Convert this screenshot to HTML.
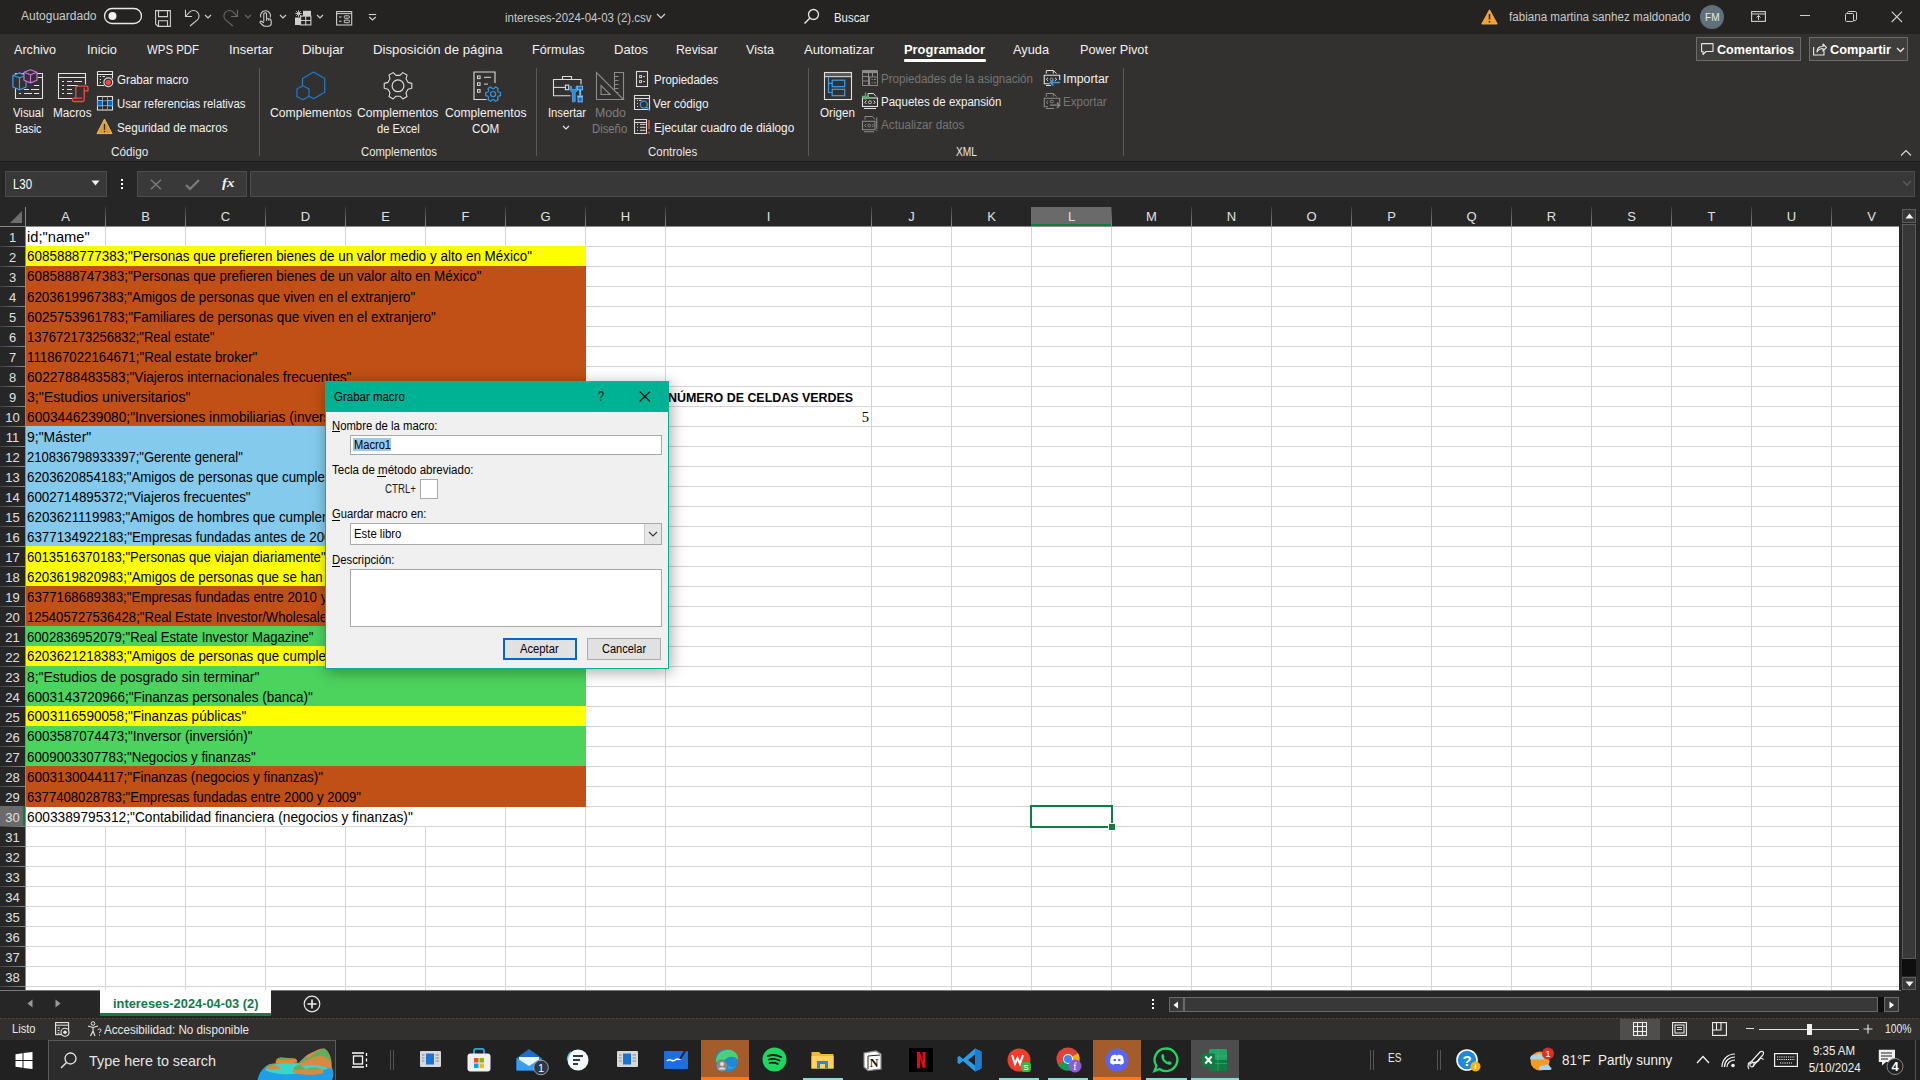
<!DOCTYPE html>
<html><head><meta charset="utf-8"><title>Excel</title>
<style>
html,body{margin:0;padding:0;width:1920px;height:1080px;overflow:hidden;background:#262626;font-family:"Liberation Sans",sans-serif;}
body>div,body>svg{position:absolute;}
.t{position:absolute;white-space:pre;line-height:1;}
svg{overflow:visible}
</style></head><body>
<div style="left:0px;top:0px;width:1920px;height:34px;background:#242321"></div>
<div style="left:0px;top:34px;width:1920px;height:127px;background:#32312f"></div>
<div style="left:0px;top:161px;width:1920px;height:1px;background:#1c1c1c"></div>
<div style="left:0px;top:162px;width:1920px;height:828px;background:#262626"></div>
<div class="t" style="left:21.00px;top:9.84px;font-size:12px;color:#cacaca;font-weight:400;font-family:'Liberation Sans',sans-serif;transform:scaleX(1.0013);transform-origin:left;">Autoguardado</div>
<svg style="left:103px;top:7px;" width="40" height="18" viewBox="0 0 40 18"><rect x="1.5" y="1.5" width="37" height="15" rx="7.5" fill="none" stroke="#e8e8e8" stroke-width="1.3"/><circle cx="9.5" cy="9" r="4" fill="#f0f0f0"/></svg>
<svg style="left:155px;top:9.5px;" width="17" height="17" viewBox="0 0 17 17"><path d="M0.6 0.6 H15.4 V16.4 H3 L0.6 14 Z" fill="none" stroke="#cfcfcf" stroke-width="1.1"/><path d="M3.5 0.6 V6.6 H12.5 V0.6" fill="none" stroke="#cfcfcf" stroke-width="1.1"/><path d="M3.5 16.4 V10.8 H12.5 V16.4" fill="none" stroke="#cfcfcf" stroke-width="1.1"/></svg>
<svg style="left:184px;top:9px;" width="18" height="18" viewBox="0 0 18 18"><path d="M1.5 0.8 V7.5 H8" fill="none" stroke="#cfcfcf" stroke-width="1.1"/><path d="M2 7 L5.6 3.1 A5.5 5.5 0 0 1 13.4 10.9 L6 17" fill="none" stroke="#cfcfcf" stroke-width="1.1"/></svg>
<svg style="left:204px;top:14px;" width="9" height="6" viewBox="0 0 9 6"><path d="M1 1 L4 4 L7 1" fill="none" stroke="#cfcfcf" stroke-width="1.2"/></svg>
<svg style="left:223px;top:9px;" width="18" height="18" viewBox="0 0 18 18"><path d="M14.4 0.8 V7.5 H8.1" fill="none" stroke="#6a6a6a" stroke-width="1.1"/><path d="M13.9 7 L10.3 3.1 A5.5 5.5 0 0 0 2.5 10.9 L9.9 17" fill="none" stroke="#6a6a6a" stroke-width="1.1"/></svg>
<svg style="left:244px;top:14px;" width="9" height="6" viewBox="0 0 9 6"><path d="M1 1 L4 4 L7 1" fill="none" stroke="#6a6a6a" stroke-width="1.1"/></svg>
<svg style="left:259px;top:9px;" width="14" height="18" viewBox="0 0 14 18"><path d="M1.8 8.5 A5 5 0 1 1 11.2 8.5" fill="none" stroke="#cfcfcf" stroke-width="1.1"/><path d="M4.8 12.5 V5 C4.8 3.5 7.6 3.5 7.6 5 V9.8 H9.8 C11.4 9.8 12.2 10.6 12.2 12.2 V14.8 C12.2 16.4 11 17.2 9 17.2 H6.3 C5 17.2 4 16.5 3 15.5 L1.2 13.6 C0.6 12.8 1.5 11.6 2.6 12.3 L4.8 13.8" fill="none" stroke="#cfcfcf" stroke-width="1.1" stroke-linejoin="round"/><path d="M7.6 9.8 V12 M9.8 9.8 V12" stroke="#cfcfcf" stroke-width="0.9"/></svg>
<svg style="left:279px;top:14px;" width="9" height="6" viewBox="0 0 9 6"><path d="M1 1 L4 4 L7 1" fill="none" stroke="#cfcfcf" stroke-width="1.2"/></svg>
<svg style="left:295px;top:10px;" width="17" height="16" viewBox="0 0 17 16"><rect x="8" y="0.8" width="8" height="5.2" fill="#cfcfcf"/><rect x="0" y="7.5" width="5.5" height="7.5" fill="#cfcfcf"/><rect x="5.6" y="6.1" width="10.3" height="8.8" fill="none" stroke="#cfcfcf" stroke-width="1.1"/><path d="M10.75 6 V15 M5.5 10.5 H16" stroke="#cfcfcf" stroke-width="1.1"/><path d="M3.5 0.3 V6.7 M0.3 3.5 H6.7 M1.2 1.2 L5.8 5.8 M5.8 1.2 L1.2 5.8" stroke="#cfcfcf" stroke-width="0.9"/></svg>
<svg style="left:316px;top:14px;" width="9" height="6" viewBox="0 0 9 6"><path d="M1 1 L4 4 L7 1" fill="none" stroke="#cfcfcf" stroke-width="1.2"/></svg>
<svg style="left:336px;top:10.5px;" width="17" height="15" viewBox="0 0 17 15"><rect x="0.6" y="0.6" width="15.1" height="13.4" fill="none" stroke="#cfcfcf" stroke-width="1.1"/><path d="M0.6 2.6 H15.7" stroke="#cfcfcf" stroke-width="1"/><path d="M3 6 H5.6 M3 10.2 H5.6" stroke="#cfcfcf" stroke-width="1.1"/><rect x="8.3" y="4.8" width="5" height="2.4" rx="0.5" fill="none" stroke="#cfcfcf" stroke-width="1"/><rect x="8.3" y="9.1" width="5" height="2.6" rx="0.5" fill="none" stroke="#cfcfcf" stroke-width="1"/></svg>
<svg style="left:368px;top:13px;" width="10" height="9" viewBox="0 0 10 9"><path d="M0.8 1.5 H8.2" stroke="#cfcfcf" stroke-width="1.1"/><path d="M1.2 4 L4.5 7 L7.8 4" fill="none" stroke="#cfcfcf" stroke-width="1.2"/></svg>
<div class="t" style="left:505.00px;top:11.84px;font-size:12px;color:#cacaca;font-weight:400;font-family:'Liberation Sans',sans-serif;transform:scaleX(0.9550);transform-origin:left;">intereses-2024-04-03 (2).csv</div>
<svg style="left:656px;top:13px;" width="11" height="7" viewBox="0 0 11 7"><path d="M1 1 L5 5 L9 1" fill="none" stroke="#d6d6d6" stroke-width="1.2"/></svg>
<svg style="left:803px;top:8px;" width="17" height="17" viewBox="0 0 17 17"><circle cx="10.5" cy="6.5" r="5" fill="none" stroke="#e6e6e6" stroke-width="1.3"/><path d="M7 10 L1.5 15.5" stroke="#e6e6e6" stroke-width="1.4"/></svg>
<div class="t" style="left:834.00px;top:11.84px;font-size:12px;color:#f0f0f0;font-weight:400;font-family:'Liberation Sans',sans-serif;transform:scaleX(0.9505);transform-origin:left;">Buscar</div>
<svg style="left:1481px;top:9px;" width="17" height="16" viewBox="0 0 17 16"><path d="M8.5 0.8 L16.3 15 H0.7 Z" fill="#f2a33a" stroke="#f2a33a" stroke-width="1" stroke-linejoin="round"/><path d="M8.5 5 V10.5" stroke="#2b2b2b" stroke-width="1.6"/><circle cx="8.5" cy="12.7" r="0.9" fill="#2b2b2b"/></svg>
<div class="t" style="left:1509.00px;top:10.84px;font-size:12px;color:#cacaca;font-weight:400;font-family:'Liberation Sans',sans-serif;transform:scaleX(0.9682);transform-origin:left;">fabiana martina sanhez maldonado</div>
<svg style="left:1700px;top:5px;" width="24" height="24" viewBox="0 0 24 24"><circle cx="12" cy="12" r="12" fill="#5f727c"/></svg>
<div class="t" style="left:1703.70px;top:12.27px;font-size:11.5px;color:#e8e8e8;font-weight:400;font-family:'Liberation Sans',sans-serif;transform:scaleX(0.8733);transform-origin:center;">FM</div>
<svg style="left:1751px;top:11px;" width="15" height="11" viewBox="0 0 15 11"><rect x="0.6" y="0.6" width="13.8" height="9.8" fill="none" stroke="#cfcfcf" stroke-width="1.1"/><path d="M0.6 3 H14.4" stroke="#cfcfcf" stroke-width="1"/><path d="M7.5 9 V4.5 M5.5 6.5 L7.5 4.5 L9.5 6.5" fill="none" stroke="#cfcfcf" stroke-width="1"/></svg>
<div style="left:1800px;top:15px;width:10px;height:1px;background:#d0d0d0"></div>
<svg style="left:1845px;top:11px;" width="12" height="12" viewBox="0 0 12 12"><rect x="0.5" y="2.5" width="8" height="8" rx="1" fill="none" stroke="#d0d0d0" stroke-width="1"/><path d="M2.5 2.5 V1.8 C2.5 0.9 3 0.5 4 0.5 H10 C11 0.5 11.5 1 11.5 2 V8 C11.5 9 11 9.5 10 9.5 H8.5" fill="none" stroke="#d0d0d0" stroke-width="1"/></svg>
<svg style="left:1891px;top:11px;" width="12" height="12" viewBox="0 0 12 12"><path d="M0.7 0.7 L11 11 M11 0.7 L0.7 11" stroke="#d0d0d0" stroke-width="1.1"/></svg>
<div class="t" style="left:14.00px;top:42.57px;font-size:13.5px;color:#f2f2f2;font-weight:400;font-family:'Liberation Sans',sans-serif;transform:scaleX(0.9330);transform-origin:left;">Archivo</div>
<div class="t" style="left:87.00px;top:42.57px;font-size:13.5px;color:#f2f2f2;font-weight:400;font-family:'Liberation Sans',sans-serif;transform:scaleX(0.9519);transform-origin:left;">Inicio</div>
<div class="t" style="left:147.00px;top:42.57px;font-size:13.5px;color:#f2f2f2;font-weight:400;font-family:'Liberation Sans',sans-serif;transform:scaleX(0.8455);transform-origin:left;">WPS PDF</div>
<div class="t" style="left:229.00px;top:42.57px;font-size:13.5px;color:#f2f2f2;font-weight:400;font-family:'Liberation Sans',sans-serif;transform:scaleX(0.9614);transform-origin:left;">Insertar</div>
<div class="t" style="left:302.00px;top:42.57px;font-size:13.5px;color:#f2f2f2;font-weight:400;font-family:'Liberation Sans',sans-serif;transform:scaleX(0.9821);transform-origin:left;">Dibujar</div>
<div class="t" style="left:373.00px;top:42.57px;font-size:13.5px;color:#f2f2f2;font-weight:400;font-family:'Liberation Sans',sans-serif;transform:scaleX(0.9804);transform-origin:left;">Disposición de página</div>
<div class="t" style="left:532.00px;top:42.57px;font-size:13.5px;color:#f2f2f2;font-weight:400;font-family:'Liberation Sans',sans-serif;transform:scaleX(0.9332);transform-origin:left;">Fórmulas</div>
<div class="t" style="left:614.00px;top:42.57px;font-size:13.5px;color:#f2f2f2;font-weight:400;font-family:'Liberation Sans',sans-serif;transform:scaleX(0.9641);transform-origin:left;">Datos</div>
<div class="t" style="left:676.00px;top:42.57px;font-size:13.5px;color:#f2f2f2;font-weight:400;font-family:'Liberation Sans',sans-serif;transform:scaleX(0.9069);transform-origin:left;">Revisar</div>
<div class="t" style="left:746.00px;top:42.57px;font-size:13.5px;color:#f2f2f2;font-weight:400;font-family:'Liberation Sans',sans-serif;transform:scaleX(0.9406);transform-origin:left;">Vista</div>
<div class="t" style="left:804.00px;top:42.57px;font-size:13.5px;color:#f2f2f2;font-weight:400;font-family:'Liberation Sans',sans-serif;transform:scaleX(0.9718);transform-origin:left;">Automatizar</div>
<div class="t" style="left:1013.00px;top:42.57px;font-size:13.5px;color:#f2f2f2;font-weight:400;font-family:'Liberation Sans',sans-serif;transform:scaleX(0.9465);transform-origin:left;">Ayuda</div>
<div class="t" style="left:1080.00px;top:42.57px;font-size:13.5px;color:#f2f2f2;font-weight:400;font-family:'Liberation Sans',sans-serif;transform:scaleX(0.9441);transform-origin:left;">Power Pivot</div>
<div class="t" style="left:904.00px;top:42.57px;font-size:13.5px;color:#ffffff;font-weight:700;font-family:'Liberation Sans',sans-serif;transform:scaleX(0.9555);transform-origin:left;">Programador</div>
<div style="left:904px;top:59px;width:82px;height:3px;background:#ffffff;border-radius:1px"></div>
<div style="left:1696px;top:37px;width:105px;height:24px;background:#3f3e3d;border:1px solid #6c6b6a;box-sizing:border-box"></div>
<svg style="left:1701px;top:43px;" width="13" height="13" viewBox="0 0 13 13"><path d="M0.6 0.6 H12 V8.5 H5 L2 11.5 V8.5 H0.6 Z" fill="none" stroke="#e8e8e8" stroke-width="1.1" stroke-linejoin="round"/></svg>
<div class="t" style="left:1717.00px;top:43.00px;font-size:13px;color:#ffffff;font-weight:700;font-family:'Liberation Sans',sans-serif;transform:scaleX(0.9690);transform-origin:left;">Comentarios</div>
<div style="left:1809px;top:37px;width:99px;height:24px;background:#3f3e3d;border:1px solid #6c6b6a;box-sizing:border-box"></div>
<svg style="left:1813px;top:42px;" width="14" height="14" viewBox="0 0 14 14"><path d="M0.6 5 V13 H11 V9" fill="none" stroke="#e8e8e8" stroke-width="1.1"/><path d="M4 10 C4 6 6 4.5 10 4.5 V2 L13.4 5.5 L10 9 V6.5 C7 6.5 5.5 7.5 4 10 Z" fill="none" stroke="#e8e8e8" stroke-width="1.1" stroke-linejoin="round"/></svg>
<div class="t" style="left:1830.00px;top:43.00px;font-size:13px;color:#ffffff;font-weight:700;font-family:'Liberation Sans',sans-serif;transform:scaleX(0.9820);transform-origin:left;">Compartir</div>
<svg style="left:1896px;top:47px;" width="9" height="6" viewBox="0 0 9 6"><path d="M1 1 L4.5 4.5 L8 1" fill="none" stroke="#e8e8e8" stroke-width="1.3"/></svg>
<div style="left:259px;top:68px;width:1px;height:88px;background:#5a5a5a"></div>
<div style="left:536px;top:68px;width:1px;height:88px;background:#5a5a5a"></div>
<div style="left:808px;top:68px;width:1px;height:88px;background:#5a5a5a"></div>
<div style="left:1123px;top:68px;width:1px;height:88px;background:#5a5a5a"></div>
<svg style="left:12px;top:69px;" width="33" height="32" viewBox="0 0 33 32">
<path d="M3.5 4.5 H30.5 V29.5 H3.5 Z M26 8.5 H30.5" fill="none" stroke="#e2e2e2" stroke-width="1.1"/>
<path d="M22 16.5 H27.2 M11.8 20.5 H17 M19 20.5 H27.2 M7 24.5 H9 M12 24.5 H20 M22 24.5 H27.2" stroke="#e2e2e2" stroke-width="1.2"/>
<path d="M7.5 3.9 L14 6.5 V18 L7.5 20.8 L0.9 18 V6.5 Z" fill="#32312f" stroke="#3c9ef0" stroke-width="1.2" stroke-linejoin="round"/>
<path d="M0.9 6.5 L7.5 8.8 L14 6.5 M7.5 8.8 V20.8" fill="none" stroke="#3c9ef0" stroke-width="1.2" stroke-linejoin="round"/>
<path d="M18.5 0.8 L25 3.3 V11.3 L18.5 13.9 L12 11.3 V3.3 Z" fill="#32312f" stroke="#d070e0" stroke-width="1.2" stroke-linejoin="round"/>
<path d="M12 3.3 L18.5 5.8 L25 3.3 M18.5 5.8 V13.9" fill="none" stroke="#d070e0" stroke-width="1.2" stroke-linejoin="round"/>
</svg>
<div class="t" style="left:13.00px;top:106.84px;font-size:12px;color:#f2f2f2;font-weight:400;font-family:'Liberation Sans',sans-serif;transform:scaleX(0.9456);transform-origin:left;">Visual</div>
<div class="t" style="left:15.20px;top:122.84px;font-size:12px;color:#f2f2f2;font-weight:400;font-family:'Liberation Sans',sans-serif;transform:scaleX(0.9031);transform-origin:left;">Basic</div>
<svg style="left:57px;top:71px;" width="33" height="32" viewBox="0 0 33 32">
<path d="M15 27.5 H1.5 V2.5 H28.5 V13.5 M1.5 6.5 H28.5" fill="none" stroke="#e2e2e2" stroke-width="1.1"/>
<path d="M5 10.5 H7 M10 10.5 H15 M17 10.5 H25 M5 14.5 H7 M10 14.5 H21 M5 18.5 H7 M10 18.5 H15 M5 22.5 H7 M10 22.5 H15.5" stroke="#e2e2e2" stroke-width="1.2"/>
<path d="M20 15.2 H29.5 Q31 15.2 31 17 V19.8 H27.2 V28.8 Q27.2 30.5 25.5 30.5 H17 Q15.3 30.5 15.3 28.8 Q15.3 27.2 17 27.2 H18.8 V17 Q18.8 15.2 20 15.2 Z" fill="#32312f" stroke="#ef4b40" stroke-width="1.3" stroke-linejoin="round"/>
<path d="M27.2 16.5 V19.8 M25 27.2 H17" fill="none" stroke="#ef4b40" stroke-width="1.2"/>
</svg>
<div class="t" style="left:52.50px;top:106.84px;font-size:12px;color:#f2f2f2;font-weight:400;font-family:'Liberation Sans',sans-serif;transform:scaleX(0.9787);transform-origin:left;">Macros</div>
<svg style="left:96px;top:70px;" width="18" height="18" viewBox="0 0 18 18">
<path d="M1.5 1.5 H16.5 V8.5 M1.5 1.5 V15.5 H8 M1.5 4.5 H16.5" fill="none" stroke="#e2e2e2" stroke-width="1.1"/>
<path d="M3.8 6.5 H5 M3.8 9.5 H5 M3.8 12.5 H5 M6.5 6.5 H9" stroke="#e2e2e2" stroke-width="1.1"/>
<circle cx="12.3" cy="12.3" r="4.4" fill="#32312f" stroke="#d8d8d8" stroke-width="1.2"/>
<circle cx="12.3" cy="12.3" r="2.6" fill="#ef4b40"/>
</svg>
<div class="t" style="left:116.50px;top:73.84px;font-size:12px;color:#f2f2f2;font-weight:400;font-family:'Liberation Sans',sans-serif;transform:scaleX(0.9659);transform-origin:left;">Grabar macro</div>
<svg style="left:96px;top:95px;" width="18" height="16" viewBox="0 0 18 16">
<rect x="1.5" y="1.5" width="15" height="13.5" fill="#2a2928" stroke="#e2e2e2" stroke-width="1.1"/>
<path d="M6.5 1.5 V15 M11.5 1.5 V15 M1.5 5.8 H16.5 M1.5 10.6 H16.5" stroke="#9a9a9a" stroke-width="0.9"/>
<rect x="1.5" y="5.5" width="5" height="5.3" fill="#0a64c0" stroke="#6cb8f8" stroke-width="1"/>
<rect x="11.5" y="5.5" width="5" height="5.3" fill="#0a64c0" stroke="#6cb8f8" stroke-width="1"/>
</svg>
<div class="t" style="left:116.50px;top:97.84px;font-size:12px;color:#f2f2f2;font-weight:400;font-family:'Liberation Sans',sans-serif;transform:scaleX(0.9445);transform-origin:left;">Usar referencias relativas</div>
<svg style="left:96px;top:118px;" width="17" height="17" viewBox="0 0 17 17"><path d="M8.5 1 L16 15.6 H1 Z" fill="#e49a34" stroke="#f3c169" stroke-width="0.9" stroke-linejoin="round"/><path d="M8.5 6 V11.8" stroke="#2b2b2b" stroke-width="1.3"/><circle cx="8.5" cy="13.6" r="0.8" fill="#2b2b2b"/></svg>
<div class="t" style="left:116.50px;top:121.84px;font-size:12px;color:#f2f2f2;font-weight:400;font-family:'Liberation Sans',sans-serif;transform:scaleX(0.9688);transform-origin:left;">Seguridad de macros</div>
<div class="t" style="left:111.30px;top:145.84px;font-size:12px;color:#e8e8e8;font-weight:400;font-family:'Liberation Sans',sans-serif;transform:scaleX(0.9782);transform-origin:left;">Código</div>
<svg style="left:296px;top:71px;" width="30" height="30" viewBox="0 0 30 30">
<path d="M6.5 14.7 V7.5 L17.5 1 L28.75 7.5 V21.25 L17.5 27.75 L13.2 25.2" fill="none" stroke="#1f7cd2" stroke-width="1.2" stroke-linejoin="round"/>
<path d="M6.9 14.75 L13 18 V25.5 L6.9 28.75 L0.9 25.5 V18 Z" fill="none" stroke="#1f7cd2" stroke-width="1.2" stroke-linejoin="round"/>
</svg>
<div class="t" style="left:270.20px;top:106.84px;font-size:12px;color:#f2f2f2;font-weight:400;font-family:'Liberation Sans',sans-serif;transform:scaleX(1.0124);transform-origin:left;">Complementos</div>
<svg style="left:383px;top:71px;" width="30" height="30" viewBox="0 0 30 30"><path d="M25.02 11.35 L28.79 12.37 L28.79 17.23 L25.02 18.25 L23.00 21.75 L24.00 25.52 L19.79 27.96 L17.02 25.21 L12.98 25.21 L10.21 27.96 L6.00 25.52 L7.00 21.75 L4.98 18.25 L1.21 17.23 L1.21 12.37 L4.98 11.35 L7.00 7.85 L6.00 4.08 L10.21 1.64 L12.98 4.39 L17.02 4.39 L19.79 1.64 L24.00 4.08 L23.00 7.85 Z" fill="none" stroke="#dcdcdc" stroke-width="1.1" stroke-linejoin="round"/><circle cx="15" cy="14.8" r="5.9" fill="none" stroke="#dcdcdc" stroke-width="1.2"/></svg>
<div class="t" style="left:357.40px;top:106.84px;font-size:12px;color:#f2f2f2;font-weight:400;font-family:'Liberation Sans',sans-serif;transform:scaleX(1.0062);transform-origin:left;">Complementos</div>
<div class="t" style="left:377.40px;top:122.84px;font-size:12px;color:#f2f2f2;font-weight:400;font-family:'Liberation Sans',sans-serif;transform:scaleX(0.9256);transform-origin:left;">de Excel</div>
<svg style="left:473px;top:71px;" width="31" height="31" viewBox="0 0 31 31">
<path d="M13.5 28.5 H1 V1 H22 V12" fill="none" stroke="#dcdcdc" stroke-width="1.1"/>
<rect x="4.5" y="5" width="2.6" height="2.6" fill="none" stroke="#dcdcdc" stroke-width="1"/>
<rect x="4.5" y="11.8" width="2.6" height="2.6" fill="none" stroke="#dcdcdc" stroke-width="1"/>
<rect x="4.5" y="18.6" width="2.6" height="2.6" fill="none" stroke="#dcdcdc" stroke-width="1"/>
<path d="M11 6.3 H18 M11 13.1 H15" stroke="#dcdcdc" stroke-width="1"/>
<path d="M25.29 21.00 L27.53 21.52 L27.53 24.68 L25.29 25.20 L24.51 26.55 L25.19 28.75 L22.45 30.33 L20.88 28.65 L19.32 28.65 L17.75 30.33 L15.01 28.75 L15.69 26.55 L14.91 25.20 L12.67 24.68 L12.67 21.52 L14.91 21.00 L15.69 19.65 L15.01 17.45 L17.75 15.87 L19.32 17.55 L20.88 17.55 L22.45 15.87 L25.19 17.45 L24.51 19.65 Z" fill="#32312f" stroke="#3a95e0" stroke-width="1.2" stroke-linejoin="round"/>
<circle cx="20.1" cy="23.1" r="2.6" fill="none" stroke="#3a95e0" stroke-width="1.2"/>
</svg>
<div class="t" style="left:444.50px;top:106.84px;font-size:12px;color:#f2f2f2;font-weight:400;font-family:'Liberation Sans',sans-serif;transform:scaleX(1.0099);transform-origin:left;">Complementos</div>
<div class="t" style="left:471.50px;top:122.84px;font-size:12px;color:#f2f2f2;font-weight:400;font-family:'Liberation Sans',sans-serif;transform:scaleX(0.9716);transform-origin:left;">COM</div>
<div class="t" style="left:360.60px;top:145.84px;font-size:12px;color:#e8e8e8;font-weight:400;font-family:'Liberation Sans',sans-serif;transform:scaleX(0.9405);transform-origin:left;">Complementos</div>
<svg style="left:552px;top:75px;" width="32" height="29" viewBox="0 0 32 29">
<path d="M10.5 4.3 V1.5 H19.5 V4.3" fill="none" stroke="#dcdcdc" stroke-width="1.1"/>
<path d="M18.5 20.8 H1.5 V4.5 H29 V9.5" fill="none" stroke="#dcdcdc" stroke-width="1.1"/>
<path d="M1.5 12.4 H13.4" stroke="#dcdcdc" stroke-width="1.1"/>
<rect x="13.4" y="10.1" width="3.3" height="4.6" fill="none" stroke="#dcdcdc" stroke-width="1.1"/>
<path d="M18.3 11.2 Q17 16.2 20.4 17.2 V26.8 H23.2 V17.2 Q26.6 16.2 25.3 11.2 L24 11.2 V14.4 H19.6 V11.2 Z" fill="#2a8ee8" stroke="#6cb8f8" stroke-width="0.6"/>
<rect x="25.6" y="11.2" width="5" height="3.6" fill="#1a6cc8" stroke="#7cc0ff" stroke-width="0.9"/>
<rect x="27.3" y="14.8" width="1.8" height="5.8" fill="#7cc0ff"/>
<rect x="25.2" y="20.5" width="5.8" height="1.6" fill="#7cc0ff"/>
<rect x="26" y="22.1" width="4.2" height="4.8" fill="#1a6cc8" stroke="#7cc0ff" stroke-width="0.9"/>
</svg>
<div class="t" style="left:547.70px;top:106.84px;font-size:12px;color:#f2f2f2;font-weight:400;font-family:'Liberation Sans',sans-serif;transform:scaleX(0.9341);transform-origin:left;">Insertar</div>
<svg style="left:562px;top:125px;" width="9" height="6" viewBox="0 0 9 6"><path d="M1 1 L4 4 L7 1" fill="none" stroke="#e8e8e8" stroke-width="1.2"/></svg>
<svg style="left:595px;top:71px;" width="30" height="30" viewBox="0 0 30 30">
<path d="M1.5 1.5 V28.5 H28.5 Z" fill="none" stroke="#8c8c8c" stroke-width="1.1" stroke-linejoin="miter"/>
<path d="M6 14.5 V23.5 H15.2 Z" fill="none" stroke="#8c8c8c" stroke-width="1.1"/>
<path d="M19.5 19.5 V1.5 H28.5 V28.5" fill="none" stroke="#8c8c8c" stroke-width="1.1"/>
<path d="M19.5 5.5 H23.5 M19.5 9.5 H23.5 M19.5 13.5 H23.5 M19.5 17.5 H23.5 M21.5 21.5 H23.5" stroke="#8c8c8c" stroke-width="1"/>
</svg>
<div class="t" style="left:594.60px;top:106.84px;font-size:12px;color:#7f7f7f;font-weight:400;font-family:'Liberation Sans',sans-serif;transform:scaleX(1.0294);transform-origin:left;">Modo</div>
<div class="t" style="left:592.30px;top:122.84px;font-size:12px;color:#7f7f7f;font-weight:400;font-family:'Liberation Sans',sans-serif;transform:scaleX(0.9423);transform-origin:left;">Diseño</div>
<svg style="left:635px;top:70px;" width="14" height="18" viewBox="0 0 14 18">
<rect x="1.5" y="1.5" width="11" height="15" fill="none" stroke="#dcdcdc" stroke-width="1.1"/>
<rect x="4.6" y="5.6" width="2" height="2" fill="none" stroke="#dcdcdc" stroke-width="0.9"/>
<rect x="4.6" y="10.6" width="2" height="2" fill="none" stroke="#dcdcdc" stroke-width="0.9"/>
<path d="M8.2 6.6 H10 M8.2 11.6 H10" stroke="#dcdcdc" stroke-width="1"/>
</svg>
<div class="t" style="left:653.60px;top:73.84px;font-size:12px;color:#f2f2f2;font-weight:400;font-family:'Liberation Sans',sans-serif;transform:scaleX(0.9542);transform-origin:left;">Propiedades</div>
<svg style="left:633px;top:94px;" width="19" height="18" viewBox="0 0 19 18">
<path d="M1.5 1.5 H16.5 V15.5 H1.5 Z M1.5 4.5 H16.5" fill="none" stroke="#dcdcdc" stroke-width="1.1"/>
<path d="M4 6.4 H5 M4 9.4 H5 M4 12.4 H5 M6 6.4 H8.5" stroke="#dcdcdc" stroke-width="1"/>
<circle cx="10.8" cy="10.6" r="3.5" fill="#32312f" stroke="#3a95e0" stroke-width="1.3"/>
<path d="M13.3 13.1 L17 16.8" stroke="#3a95e0" stroke-width="1.5"/>
</svg>
<div class="t" style="left:653.20px;top:97.84px;font-size:12px;color:#f2f2f2;font-weight:400;font-family:'Liberation Sans',sans-serif;transform:scaleX(0.9787);transform-origin:left;">Ver código</div>
<svg style="left:633px;top:118px;" width="19" height="17" viewBox="0 0 19 17">
<path d="M1.5 1.5 H13.5 V15.5 H1.5 Z M1.5 4.5 H13.5" fill="none" stroke="#dcdcdc" stroke-width="1.1"/>
<path d="M4 6.3 H5 M4 9.3 H5 M4 12.3 H5 M7 6.3 H12.5 M7 9.3 H12.5 M7 12.3 H12.5" stroke="#dcdcdc" stroke-width="1"/>
<path d="M16 2 V10.9 M16 13.6 V15.6" stroke="#ef4b40" stroke-width="1.6"/>
</svg>
<div class="t" style="left:653.60px;top:121.84px;font-size:12px;color:#f2f2f2;font-weight:400;font-family:'Liberation Sans',sans-serif;transform:scaleX(0.9820);transform-origin:left;">Ejecutar cuadro de diálogo</div>
<div class="t" style="left:648.30px;top:145.84px;font-size:12px;color:#e8e8e8;font-weight:400;font-family:'Liberation Sans',sans-serif;transform:scaleX(0.9580);transform-origin:left;">Controles</div>
<svg style="left:823px;top:71px;" width="30" height="30" viewBox="0 0 30 30">
<rect x="1.5" y="1.5" width="27" height="4.2" fill="#5a5a5a"/>
<rect x="1.5" y="1.5" width="27" height="27" fill="none" stroke="#e0e0e0" stroke-width="1.1"/>
<path d="M1.5 5.7 H28.5" stroke="#e0e0e0" stroke-width="1"/>
<path d="M5.5 6 V21.5 H9.2 M5.5 12.3 H9.2" fill="none" stroke="#3aa0f0" stroke-width="1.2"/>
<rect x="9.2" y="9.2" width="12.5" height="6.5" fill="none" stroke="#3aa0f0" stroke-width="1.2"/>
<rect x="9.2" y="18.3" width="12.5" height="6.4" fill="none" stroke="#3aa0f0" stroke-width="1.2"/>
</svg>
<div class="t" style="left:820.30px;top:106.84px;font-size:12px;color:#f2f2f2;font-weight:400;font-family:'Liberation Sans',sans-serif;transform:scaleX(0.9717);transform-origin:left;">Origen</div>
<svg style="left:861px;top:69px;" width="18" height="18" viewBox="0 0 18 18">
<rect x="1.5" y="1.5" width="15" height="2.6" fill="#8a8a8a"/>
<path d="M1.5 1.5 H16.5 V7.5 M1.5 1.5 V16.5 H7.5 V1.5 M1.5 7.5 H7.5 M1.5 12 H7.5 M11.5 4 V7.5" fill="none" stroke="#8a8a8a" stroke-width="1"/>
<rect x="8.5" y="8" width="8" height="8.5" fill="none" stroke="#8a8a8a" stroke-width="1"/>
<path d="M10.5 10.5 H11.8 M10.5 13.8 H11.8 M13 10.5 H15 M13 13.8 H15" stroke="#8a8a8a" stroke-width="1.1"/>
</svg>
<div class="t" style="left:881.30px;top:72.84px;font-size:12px;color:#767676;font-weight:400;font-family:'Liberation Sans',sans-serif;transform:scaleX(0.9654);transform-origin:left;">Propiedades de la asignación</div>
<svg style="left:861px;top:92px;" width="18" height="18" viewBox="0 0 18 18">
<path d="M7 4.5 V1.5 H12.5 L15 4.5" fill="none" stroke="#e0e0e0" stroke-width="1"/>
<rect x="1.5" y="6" width="15" height="8.5" fill="none" stroke="#e0e0e0" stroke-width="1.1"/>
<path d="M5.5 8.5 L3.8 10.3 L5.5 12 M12.5 8.5 L14.2 10.3 L12.5 12" fill="none" stroke="#e0e0e0" stroke-width="1"/>
<circle cx="9" cy="10.3" r="1.5" fill="none" stroke="#bcbcbc" stroke-width="1"/>
<path d="M3 16.5 H15" stroke="#e0e0e0" stroke-width="1"/>
<path d="M4.5 0.5 V8 M0.8 4.3 H8.2" stroke="#3cc05a" stroke-width="1.3"/>
</svg>
<div class="t" style="left:881.30px;top:95.84px;font-size:12px;color:#f2f2f2;font-weight:400;font-family:'Liberation Sans',sans-serif;transform:scaleX(0.9599);transform-origin:left;">Paquetes de expansión</div>
<svg style="left:861px;top:115px;" width="18" height="18" viewBox="0 0 18 18">
<path d="M4 4.5 V1.5 H11.5 L14 4.5" fill="none" stroke="#8a8a8a" stroke-width="1"/>
<rect x="1.5" y="6.3" width="12.5" height="8.4" fill="none" stroke="#8a8a8a" stroke-width="1.1"/>
<path d="M5.3 8.8 L3.6 10.5 L5.3 12.2 M11 8.8 L12.7 10.5 L11 12.2" fill="none" stroke="#8a8a8a" stroke-width="1"/>
<circle cx="8.2" cy="10.5" r="1.4" fill="none" stroke="#8a8a8a" stroke-width="1"/>
<path d="M3 16.7 H13 M15.8 2.5 V13.7 M15.8 15 V16" stroke="#8a8a8a" stroke-width="1.1"/>
</svg>
<div class="t" style="left:881.30px;top:118.84px;font-size:12px;color:#767676;font-weight:400;font-family:'Liberation Sans',sans-serif;transform:scaleX(0.9768);transform-origin:left;">Actualizar datos</div>
<svg style="left:1043px;top:69px;" width="18" height="18" viewBox="0 0 18 18">
<path d="M3.3 4.7 V1.5 H10.3 L13.5 4.5 M10.3 1.5 V4.5" fill="none" stroke="#e0e0e0" stroke-width="1"/>
<path d="M16.7 11 V6.3 H1.25 V14.7 H6.5" fill="none" stroke="#e0e0e0" stroke-width="1.1"/>
<path d="M5 8.8 L3.3 10.3 L5 11.8 M12 8.8 L13.7 10.3 L12 11.8" fill="none" stroke="#e0e0e0" stroke-width="1"/>
<circle cx="8.5" cy="10.3" r="1.4" fill="none" stroke="#9a9a9a" stroke-width="1"/>
<path d="M3 16.5 H8" stroke="#e0e0e0" stroke-width="1"/>
<path d="M17 13.5 H7.5 M10.5 10.5 L7.5 13.5 L10.5 16.5" fill="none" stroke="#3aa0f0" stroke-width="1.6"/>
</svg>
<div class="t" style="left:1063.30px;top:72.84px;font-size:12px;color:#f2f2f2;font-weight:400;font-family:'Liberation Sans',sans-serif;transform:scaleX(1.0274);transform-origin:left;">Importar</div>
<svg style="left:1043px;top:92px;" width="18" height="18" viewBox="0 0 18 18">
<path d="M3.3 4.7 V1.5 H10.3 L13.5 4.5 M10.3 1.5 V4.5" fill="none" stroke="#8a8a8a" stroke-width="1"/>
<path d="M16.7 11.5 V6.3 H1.25 V14.7 H5" fill="none" stroke="#8a8a8a" stroke-width="1.1"/>
<path d="M5 8.8 L3.3 10.3 L5 11.8" fill="none" stroke="#8a8a8a" stroke-width="1"/>
<rect x="7.3" y="8.3" width="3" height="2.4" rx="1" fill="none" stroke="#8a8a8a" stroke-width="1"/>
<path d="M3 16.5 H11" stroke="#8a8a8a" stroke-width="1"/>
<path d="M7 13.2 H16.5 M13.8 10.5 L16.8 13.2 L13.8 16" fill="none" stroke="#8a8a8a" stroke-width="1.3"/>
</svg>
<div class="t" style="left:1063.30px;top:95.84px;font-size:12px;color:#767676;font-weight:400;font-family:'Liberation Sans',sans-serif;transform:scaleX(0.9636);transform-origin:left;">Exportar</div>
<div class="t" style="left:955.80px;top:145.84px;font-size:12px;color:#e8e8e8;font-weight:400;font-family:'Liberation Sans',sans-serif;transform:scaleX(0.8471);transform-origin:left;">XML</div>
<svg style="left:1900px;top:149px;" width="12" height="8" viewBox="0 0 12 8"><path d="M1 6.5 L6 1.5 L11 6.5" fill="none" stroke="#d8d8d8" stroke-width="1.2"/></svg>
<div style="left:5px;top:171px;width:102px;height:26px;background:#383838;border:1px solid #4c4c4c;box-sizing:border-box"></div>
<div class="t" style="left:12.50px;top:177.15px;font-size:14px;color:#ffffff;font-weight:400;font-family:'Liberation Sans',sans-serif;transform:scaleX(0.8134);transform-origin:left;">L30</div>
<svg style="left:91px;top:180px;" width="9" height="6" viewBox="0 0 9 6"><path d="M0.5 0.5 H8.5 L4.5 5.5 Z" fill="#f0f0f0"/></svg>
<div style="left:121px;top:179px;width:2px;height:2px;background:#ffffff"></div>
<div style="left:121px;top:183px;width:2px;height:2px;background:#ffffff"></div>
<div style="left:121px;top:187px;width:2px;height:2px;background:#ffffff"></div>
<div style="left:137px;top:171px;width:110px;height:26px;background:#393939;border:1px solid #4c4c4c;box-sizing:border-box"></div>
<svg style="left:150px;top:179px;" width="12" height="11" viewBox="0 0 12 11"><path d="M0.8 0.8 L11 10.2 M11 0.8 L0.8 10.2" stroke="#7b7b7b" stroke-width="1.5"/></svg>
<svg style="left:185px;top:179px;" width="15" height="11" viewBox="0 0 15 11"><path d="M1 6 L5 10 L14 1" fill="none" stroke="#7b7b7b" stroke-width="2.2"/></svg>
<div class="t" style="left:221.50px;top:176.00px;font-size:13px;color:#f0f0f0;font-weight:700;font-family:'Liberation Serif',sans-serif;transform:scaleX(1.1543);transform-origin:left;font-style:italic;">fx</div>
<div style="left:250px;top:171px;width:1665px;height:26px;background:#383838;border:1px solid #4c4c4c;box-sizing:border-box"></div>
<svg style="left:1902px;top:180px;" width="10" height="6" viewBox="0 0 10 6"><path d="M1 1 L5 5 L9 1" fill="none" stroke="#5c5c5c" stroke-width="1.3"/></svg>
<div style="left:26px;top:227px;width:1873px;height:763px;background:#ffffff"></div>
<div style="left:26px;top:227px;width:1873px;height:763px;background:repeating-linear-gradient(to bottom, transparent 0px, transparent 19px, #d4d4d4 19px, #d4d4d4 20px)"></div>
<div style="left:105px;top:227px;width:1px;height:763px;background:#d4d4d4"></div>
<div style="left:185px;top:227px;width:1px;height:763px;background:#d4d4d4"></div>
<div style="left:265px;top:227px;width:1px;height:763px;background:#d4d4d4"></div>
<div style="left:345px;top:227px;width:1px;height:763px;background:#d4d4d4"></div>
<div style="left:425px;top:227px;width:1px;height:763px;background:#d4d4d4"></div>
<div style="left:505px;top:227px;width:1px;height:763px;background:#d4d4d4"></div>
<div style="left:585px;top:227px;width:1px;height:763px;background:#d4d4d4"></div>
<div style="left:665px;top:227px;width:1px;height:763px;background:#d4d4d4"></div>
<div style="left:871px;top:227px;width:1px;height:763px;background:#d4d4d4"></div>
<div style="left:951px;top:227px;width:1px;height:763px;background:#d4d4d4"></div>
<div style="left:1031px;top:227px;width:1px;height:763px;background:#d4d4d4"></div>
<div style="left:1111px;top:227px;width:1px;height:763px;background:#d4d4d4"></div>
<div style="left:1191px;top:227px;width:1px;height:763px;background:#d4d4d4"></div>
<div style="left:1271px;top:227px;width:1px;height:763px;background:#d4d4d4"></div>
<div style="left:1351px;top:227px;width:1px;height:763px;background:#d4d4d4"></div>
<div style="left:1431px;top:227px;width:1px;height:763px;background:#d4d4d4"></div>
<div style="left:1511px;top:227px;width:1px;height:763px;background:#d4d4d4"></div>
<div style="left:1591px;top:227px;width:1px;height:763px;background:#d4d4d4"></div>
<div style="left:1671px;top:227px;width:1px;height:763px;background:#d4d4d4"></div>
<div style="left:1751px;top:227px;width:1px;height:763px;background:#d4d4d4"></div>
<div style="left:1831px;top:227px;width:1px;height:763px;background:#d4d4d4"></div>
<div style="left:26px;top:246px;width:560px;height:21px;background:#ffff00"></div>
<div style="left:26px;top:266px;width:560px;height:21px;background:#c05015"></div>
<div style="left:26px;top:286px;width:560px;height:21px;background:#c05015"></div>
<div style="left:26px;top:306px;width:560px;height:21px;background:#c05015"></div>
<div style="left:26px;top:326px;width:560px;height:21px;background:#c05015"></div>
<div style="left:26px;top:346px;width:560px;height:21px;background:#c05015"></div>
<div style="left:26px;top:366px;width:560px;height:21px;background:#c05015"></div>
<div style="left:26px;top:386px;width:560px;height:21px;background:#c05015"></div>
<div style="left:26px;top:406px;width:560px;height:21px;background:#c05015"></div>
<div style="left:26px;top:426px;width:560px;height:21px;background:#83caec"></div>
<div style="left:26px;top:446px;width:560px;height:21px;background:#83caec"></div>
<div style="left:26px;top:466px;width:560px;height:21px;background:#83caec"></div>
<div style="left:26px;top:486px;width:560px;height:21px;background:#83caec"></div>
<div style="left:26px;top:506px;width:560px;height:21px;background:#83caec"></div>
<div style="left:26px;top:526px;width:560px;height:21px;background:#83caec"></div>
<div style="left:26px;top:546px;width:560px;height:21px;background:#ffff00"></div>
<div style="left:26px;top:566px;width:560px;height:21px;background:#ffff00"></div>
<div style="left:26px;top:586px;width:560px;height:21px;background:#c05015"></div>
<div style="left:26px;top:606px;width:560px;height:21px;background:#c05015"></div>
<div style="left:26px;top:626px;width:560px;height:21px;background:#4bd35e"></div>
<div style="left:26px;top:646px;width:560px;height:21px;background:#ffff00"></div>
<div style="left:26px;top:666px;width:560px;height:21px;background:#4bd35e"></div>
<div style="left:26px;top:686px;width:560px;height:21px;background:#4bd35e"></div>
<div style="left:26px;top:706px;width:560px;height:21px;background:#ffff00"></div>
<div style="left:26px;top:726px;width:560px;height:21px;background:#4bd35e"></div>
<div style="left:26px;top:746px;width:560px;height:21px;background:#4bd35e"></div>
<div style="left:26px;top:766px;width:560px;height:21px;background:#c05015"></div>
<div style="left:26px;top:786px;width:560px;height:21px;background:#c05015"></div>
<div style="left:26px;top:807px;width:478px;height:19px;background:#ffffff"></div>
<div class="t" style="left:26.50px;top:229.58px;font-size:14.67px;color:#000000;font-weight:400;font-family:'Liberation Sans',sans-serif;transform:scaleX(1.003);transform-origin:left;">id;&quot;name&quot;</div>
<div class="t" style="left:26.50px;top:248.58px;font-size:14.67px;color:#000000;font-weight:400;font-family:'Liberation Sans',sans-serif;transform:scaleX(0.9171);transform-origin:left;">6085888777383;&quot;Personas que prefieren bienes de un valor medio y alto en México&quot;</div>
<div class="t" style="left:26.50px;top:268.58px;font-size:14.67px;color:#000000;font-weight:400;font-family:'Liberation Sans',sans-serif;transform:scaleX(0.9176);transform-origin:left;">6085888747383;&quot;Personas que prefieren bienes de un valor alto en México&quot;</div>
<div class="t" style="left:26.50px;top:289.58px;font-size:14.67px;color:#000000;font-weight:400;font-family:'Liberation Sans',sans-serif;transform:scaleX(0.9115);transform-origin:left;">6203619967383;&quot;Amigos de personas que viven en el extranjero&quot;</div>
<div class="t" style="left:26.50px;top:309.58px;font-size:14.67px;color:#000000;font-weight:400;font-family:'Liberation Sans',sans-serif;transform:scaleX(0.9193);transform-origin:left;">6025753961783;&quot;Familiares de personas que viven en el extranjero&quot;</div>
<div class="t" style="left:26.50px;top:329.58px;font-size:14.67px;color:#000000;font-weight:400;font-family:'Liberation Sans',sans-serif;transform:scaleX(0.8888);transform-origin:left;">137672173256832;&quot;Real estate&quot;</div>
<div class="t" style="left:26.50px;top:349.58px;font-size:14.67px;color:#000000;font-weight:400;font-family:'Liberation Sans',sans-serif;transform:scaleX(0.9055);transform-origin:left;">111867022164671;&quot;Real estate broker&quot;</div>
<div class="t" style="left:26.50px;top:369.58px;font-size:14.67px;color:#000000;font-weight:400;font-family:'Liberation Sans',sans-serif;transform:scaleX(0.9315);transform-origin:left;">6022788483583;&quot;Viajeros internacionales frecuentes&quot;</div>
<div class="t" style="left:26.50px;top:389.58px;font-size:14.67px;color:#000000;font-weight:400;font-family:'Liberation Sans',sans-serif;transform:scaleX(0.9659);transform-origin:left;">3;&quot;Estudios universitarios&quot;</div>
<div class="t" style="left:26.50px;top:409.58px;font-size:14.67px;color:#000000;font-weight:400;font-family:'Liberation Sans',sans-serif;transform:scaleX(0.9374);transform-origin:left;">6003446239080;&quot;Inversiones inmobiliarias (inversión)&quot;</div>
<div class="t" style="left:26.50px;top:429.58px;font-size:14.67px;color:#000000;font-weight:400;font-family:'Liberation Sans',sans-serif;transform:scaleX(0.9529);transform-origin:left;">9;&quot;Máster&quot;</div>
<div class="t" style="left:26.50px;top:449.58px;font-size:14.67px;color:#000000;font-weight:400;font-family:'Liberation Sans',sans-serif;transform:scaleX(0.8892);transform-origin:left;">210836798933397;&quot;Gerente general&quot;</div>
<div class="t" style="left:26.50px;top:469.58px;font-size:14.67px;color:#000000;font-weight:400;font-family:'Liberation Sans',sans-serif;transform:scaleX(0.9063);transform-origin:left;">6203620854183;&quot;Amigos de personas que cumplen años en 0-7 días&quot;</div>
<div class="t" style="left:26.50px;top:489.58px;font-size:14.67px;color:#000000;font-weight:400;font-family:'Liberation Sans',sans-serif;transform:scaleX(0.9102);transform-origin:left;">6002714895372;&quot;Viajeros frecuentes&quot;</div>
<div class="t" style="left:26.50px;top:509.58px;font-size:14.67px;color:#000000;font-weight:400;font-family:'Liberation Sans',sans-serif;transform:scaleX(0.9126);transform-origin:left;">6203621119983;&quot;Amigos de hombres que cumplen años en 0-7 días&quot;</div>
<div class="t" style="left:26.50px;top:529.58px;font-size:14.67px;color:#000000;font-weight:400;font-family:'Liberation Sans',sans-serif;transform:scaleX(0.9106);transform-origin:left;">6377134922183;&quot;Empresas fundadas antes de 2000&quot;</div>
<div class="t" style="left:26.50px;top:549.58px;font-size:14.67px;color:#000000;font-weight:400;font-family:'Liberation Sans',sans-serif;transform:scaleX(0.8941);transform-origin:left;">6013516370183;&quot;Personas que viajan diariamente&quot;</div>
<div class="t" style="left:26.50px;top:569.58px;font-size:14.67px;color:#000000;font-weight:400;font-family:'Liberation Sans',sans-serif;transform:scaleX(0.9086);transform-origin:left;">6203619820983;&quot;Amigos de personas que se han mudado&quot;</div>
<div class="t" style="left:26.50px;top:589.58px;font-size:14.67px;color:#000000;font-weight:400;font-family:'Liberation Sans',sans-serif;transform:scaleX(0.907);transform-origin:left;">6377168689383;&quot;Empresas fundadas entre 2010 y 2019&quot;</div>
<div class="t" style="left:26.50px;top:609.58px;font-size:14.67px;color:#000000;font-weight:400;font-family:'Liberation Sans',sans-serif;transform:scaleX(0.8927);transform-origin:left;">125405727536428;&quot;Real Estate Investor/Wholesaler&quot;</div>
<div class="t" style="left:26.50px;top:629.58px;font-size:14.67px;color:#000000;font-weight:400;font-family:'Liberation Sans',sans-serif;transform:scaleX(0.8952);transform-origin:left;">6002836952079;&quot;Real Estate Investor Magazine&quot;</div>
<div class="t" style="left:26.50px;top:648.58px;font-size:14.67px;color:#000000;font-weight:400;font-family:'Liberation Sans',sans-serif;transform:scaleX(0.9091);transform-origin:left;">6203621218383;&quot;Amigos de personas que cumplen años en un mes&quot;</div>
<div class="t" style="left:26.50px;top:669.58px;font-size:14.67px;color:#000000;font-weight:400;font-family:'Liberation Sans',sans-serif;transform:scaleX(0.9485);transform-origin:left;">8;&quot;Estudios de posgrado sin terminar&quot;</div>
<div class="t" style="left:26.50px;top:689.58px;font-size:14.67px;color:#000000;font-weight:400;font-family:'Liberation Sans',sans-serif;transform:scaleX(0.924);transform-origin:left;">6003143720966;&quot;Finanzas personales (banca)&quot;</div>
<div class="t" style="left:26.50px;top:708.58px;font-size:14.67px;color:#000000;font-weight:400;font-family:'Liberation Sans',sans-serif;transform:scaleX(0.9262);transform-origin:left;">6003116590058;&quot;Finanzas públicas&quot;</div>
<div class="t" style="left:26.50px;top:728.58px;font-size:14.67px;color:#000000;font-weight:400;font-family:'Liberation Sans',sans-serif;transform:scaleX(0.917);transform-origin:left;">6003587074473;&quot;Inversor (inversión)&quot;</div>
<div class="t" style="left:26.50px;top:749.58px;font-size:14.67px;color:#000000;font-weight:400;font-family:'Liberation Sans',sans-serif;transform:scaleX(0.9092);transform-origin:left;">6009003307783;&quot;Negocios y finanzas&quot;</div>
<div class="t" style="left:26.50px;top:769.58px;font-size:14.67px;color:#000000;font-weight:400;font-family:'Liberation Sans',sans-serif;transform:scaleX(0.9211);transform-origin:left;">6003130044117;&quot;Finanzas (negocios y finanzas)&quot;</div>
<div class="t" style="left:26.50px;top:789.58px;font-size:14.67px;color:#000000;font-weight:400;font-family:'Liberation Sans',sans-serif;transform:scaleX(0.8954);transform-origin:left;">6377408028783;&quot;Empresas fundadas entre 2000 y 2009&quot;</div>
<div class="t" style="left:26.50px;top:809.58px;font-size:14.67px;color:#000000;font-weight:400;font-family:'Liberation Sans',sans-serif;transform:scaleX(0.9362);transform-origin:left;">6003389795312;&quot;Contabilidad financiera (negocios y finanzas)&quot;</div>
<div class="t" style="left:668.00px;top:391.00px;font-size:13px;color:#000;font-weight:700;font-family:'Liberation Sans',sans-serif;transform:scaleX(0.9557);transform-origin:left;">NÚMERO DE CELDAS VERDES</div>
<div class="t" style="left:861.75px;top:409.73px;font-size:14.5px;color:#000;font-weight:400;font-family:'Liberation Serif',sans-serif;">5</div>
<div style="left:1030px;top:805px;width:83px;height:23px;border:2px solid #107c41;box-sizing:border-box"></div>
<div style="left:1108px;top:823px;width:6px;height:6px;background:#107c41;border:1px solid #fff"></div>
<div style="left:0px;top:226px;width:1899px;height:1px;background:#8a8a8a"></div>
<div style="left:25px;top:207px;width:1px;height:783px;background:#8a8a8a"></div>
<div style="left:105px;top:207px;width:1px;height:19px;background:linear-gradient(to bottom,#3a3a3a,#8a8a8a)"></div>
<div style="left:185px;top:207px;width:1px;height:19px;background:linear-gradient(to bottom,#3a3a3a,#8a8a8a)"></div>
<div style="left:265px;top:207px;width:1px;height:19px;background:linear-gradient(to bottom,#3a3a3a,#8a8a8a)"></div>
<div style="left:345px;top:207px;width:1px;height:19px;background:linear-gradient(to bottom,#3a3a3a,#8a8a8a)"></div>
<div style="left:425px;top:207px;width:1px;height:19px;background:linear-gradient(to bottom,#3a3a3a,#8a8a8a)"></div>
<div style="left:505px;top:207px;width:1px;height:19px;background:linear-gradient(to bottom,#3a3a3a,#8a8a8a)"></div>
<div style="left:585px;top:207px;width:1px;height:19px;background:linear-gradient(to bottom,#3a3a3a,#8a8a8a)"></div>
<div style="left:665px;top:207px;width:1px;height:19px;background:linear-gradient(to bottom,#3a3a3a,#8a8a8a)"></div>
<div style="left:871px;top:207px;width:1px;height:19px;background:linear-gradient(to bottom,#3a3a3a,#8a8a8a)"></div>
<div style="left:951px;top:207px;width:1px;height:19px;background:linear-gradient(to bottom,#3a3a3a,#8a8a8a)"></div>
<div style="left:1031px;top:207px;width:1px;height:19px;background:linear-gradient(to bottom,#3a3a3a,#8a8a8a)"></div>
<div style="left:1111px;top:207px;width:1px;height:19px;background:linear-gradient(to bottom,#3a3a3a,#8a8a8a)"></div>
<div style="left:1191px;top:207px;width:1px;height:19px;background:linear-gradient(to bottom,#3a3a3a,#8a8a8a)"></div>
<div style="left:1271px;top:207px;width:1px;height:19px;background:linear-gradient(to bottom,#3a3a3a,#8a8a8a)"></div>
<div style="left:1351px;top:207px;width:1px;height:19px;background:linear-gradient(to bottom,#3a3a3a,#8a8a8a)"></div>
<div style="left:1431px;top:207px;width:1px;height:19px;background:linear-gradient(to bottom,#3a3a3a,#8a8a8a)"></div>
<div style="left:1511px;top:207px;width:1px;height:19px;background:linear-gradient(to bottom,#3a3a3a,#8a8a8a)"></div>
<div style="left:1591px;top:207px;width:1px;height:19px;background:linear-gradient(to bottom,#3a3a3a,#8a8a8a)"></div>
<div style="left:1671px;top:207px;width:1px;height:19px;background:linear-gradient(to bottom,#3a3a3a,#8a8a8a)"></div>
<div style="left:1751px;top:207px;width:1px;height:19px;background:linear-gradient(to bottom,#3a3a3a,#8a8a8a)"></div>
<div style="left:1831px;top:207px;width:1px;height:19px;background:linear-gradient(to bottom,#3a3a3a,#8a8a8a)"></div>
<div style="left:1031px;top:207px;width:80px;height:19px;background:#6a6a6a;border-bottom:2px solid #107c41;box-sizing:border-box"></div>
<div class="t" style="left:61.16px;top:210.00px;font-size:13px;color:#e0e0e0;font-weight:400;font-family:'Liberation Sans',sans-serif;">A</div>
<div class="t" style="left:141.16px;top:210.00px;font-size:13px;color:#e0e0e0;font-weight:400;font-family:'Liberation Sans',sans-serif;">B</div>
<div class="t" style="left:220.81px;top:210.00px;font-size:13px;color:#e0e0e0;font-weight:400;font-family:'Liberation Sans',sans-serif;">C</div>
<div class="t" style="left:300.81px;top:210.00px;font-size:13px;color:#e0e0e0;font-weight:400;font-family:'Liberation Sans',sans-serif;">D</div>
<div class="t" style="left:381.16px;top:210.00px;font-size:13px;color:#e0e0e0;font-weight:400;font-family:'Liberation Sans',sans-serif;">E</div>
<div class="t" style="left:461.53px;top:210.00px;font-size:13px;color:#e0e0e0;font-weight:400;font-family:'Liberation Sans',sans-serif;">F</div>
<div class="t" style="left:540.44px;top:210.00px;font-size:13px;color:#e0e0e0;font-weight:400;font-family:'Liberation Sans',sans-serif;">G</div>
<div class="t" style="left:620.81px;top:210.00px;font-size:13px;color:#e0e0e0;font-weight:400;font-family:'Liberation Sans',sans-serif;">H</div>
<div class="t" style="left:766.69px;top:210.00px;font-size:13px;color:#e0e0e0;font-weight:400;font-family:'Liberation Sans',sans-serif;">I</div>
<div class="t" style="left:908.25px;top:210.00px;font-size:13px;color:#e0e0e0;font-weight:400;font-family:'Liberation Sans',sans-serif;">J</div>
<div class="t" style="left:987.16px;top:210.00px;font-size:13px;color:#e0e0e0;font-weight:400;font-family:'Liberation Sans',sans-serif;">K</div>
<div class="t" style="left:1067.89px;top:210.00px;font-size:13px;color:#e0e0e0;font-weight:400;font-family:'Liberation Sans',sans-serif;">L</div>
<div class="t" style="left:1146.09px;top:210.00px;font-size:13px;color:#e0e0e0;font-weight:400;font-family:'Liberation Sans',sans-serif;">M</div>
<div class="t" style="left:1226.81px;top:210.00px;font-size:13px;color:#e0e0e0;font-weight:400;font-family:'Liberation Sans',sans-serif;">N</div>
<div class="t" style="left:1306.44px;top:210.00px;font-size:13px;color:#e0e0e0;font-weight:400;font-family:'Liberation Sans',sans-serif;">O</div>
<div class="t" style="left:1387.16px;top:210.00px;font-size:13px;color:#e0e0e0;font-weight:400;font-family:'Liberation Sans',sans-serif;">P</div>
<div class="t" style="left:1466.44px;top:210.00px;font-size:13px;color:#e0e0e0;font-weight:400;font-family:'Liberation Sans',sans-serif;">Q</div>
<div class="t" style="left:1546.81px;top:210.00px;font-size:13px;color:#e0e0e0;font-weight:400;font-family:'Liberation Sans',sans-serif;">R</div>
<div class="t" style="left:1627.16px;top:210.00px;font-size:13px;color:#e0e0e0;font-weight:400;font-family:'Liberation Sans',sans-serif;">S</div>
<div class="t" style="left:1707.53px;top:210.00px;font-size:13px;color:#e0e0e0;font-weight:400;font-family:'Liberation Sans',sans-serif;">T</div>
<div class="t" style="left:1786.81px;top:210.00px;font-size:13px;color:#e0e0e0;font-weight:400;font-family:'Liberation Sans',sans-serif;">U</div>
<div class="t" style="left:1867.16px;top:210.00px;font-size:13px;color:#e0e0e0;font-weight:400;font-family:'Liberation Sans',sans-serif;">V</div>
<div style="left:0px;top:246px;width:25px;height:1px;background:linear-gradient(to right,#3e3e3e,#8a8a8a)"></div>
<div style="left:0px;top:266px;width:25px;height:1px;background:linear-gradient(to right,#3e3e3e,#8a8a8a)"></div>
<div style="left:0px;top:286px;width:25px;height:1px;background:linear-gradient(to right,#3e3e3e,#8a8a8a)"></div>
<div style="left:0px;top:306px;width:25px;height:1px;background:linear-gradient(to right,#3e3e3e,#8a8a8a)"></div>
<div style="left:0px;top:326px;width:25px;height:1px;background:linear-gradient(to right,#3e3e3e,#8a8a8a)"></div>
<div style="left:0px;top:346px;width:25px;height:1px;background:linear-gradient(to right,#3e3e3e,#8a8a8a)"></div>
<div style="left:0px;top:366px;width:25px;height:1px;background:linear-gradient(to right,#3e3e3e,#8a8a8a)"></div>
<div style="left:0px;top:386px;width:25px;height:1px;background:linear-gradient(to right,#3e3e3e,#8a8a8a)"></div>
<div style="left:0px;top:406px;width:25px;height:1px;background:linear-gradient(to right,#3e3e3e,#8a8a8a)"></div>
<div style="left:0px;top:426px;width:25px;height:1px;background:linear-gradient(to right,#3e3e3e,#8a8a8a)"></div>
<div style="left:0px;top:446px;width:25px;height:1px;background:linear-gradient(to right,#3e3e3e,#8a8a8a)"></div>
<div style="left:0px;top:466px;width:25px;height:1px;background:linear-gradient(to right,#3e3e3e,#8a8a8a)"></div>
<div style="left:0px;top:486px;width:25px;height:1px;background:linear-gradient(to right,#3e3e3e,#8a8a8a)"></div>
<div style="left:0px;top:506px;width:25px;height:1px;background:linear-gradient(to right,#3e3e3e,#8a8a8a)"></div>
<div style="left:0px;top:526px;width:25px;height:1px;background:linear-gradient(to right,#3e3e3e,#8a8a8a)"></div>
<div style="left:0px;top:546px;width:25px;height:1px;background:linear-gradient(to right,#3e3e3e,#8a8a8a)"></div>
<div style="left:0px;top:566px;width:25px;height:1px;background:linear-gradient(to right,#3e3e3e,#8a8a8a)"></div>
<div style="left:0px;top:586px;width:25px;height:1px;background:linear-gradient(to right,#3e3e3e,#8a8a8a)"></div>
<div style="left:0px;top:606px;width:25px;height:1px;background:linear-gradient(to right,#3e3e3e,#8a8a8a)"></div>
<div style="left:0px;top:626px;width:25px;height:1px;background:linear-gradient(to right,#3e3e3e,#8a8a8a)"></div>
<div style="left:0px;top:646px;width:25px;height:1px;background:linear-gradient(to right,#3e3e3e,#8a8a8a)"></div>
<div style="left:0px;top:666px;width:25px;height:1px;background:linear-gradient(to right,#3e3e3e,#8a8a8a)"></div>
<div style="left:0px;top:686px;width:25px;height:1px;background:linear-gradient(to right,#3e3e3e,#8a8a8a)"></div>
<div style="left:0px;top:706px;width:25px;height:1px;background:linear-gradient(to right,#3e3e3e,#8a8a8a)"></div>
<div style="left:0px;top:726px;width:25px;height:1px;background:linear-gradient(to right,#3e3e3e,#8a8a8a)"></div>
<div style="left:0px;top:746px;width:25px;height:1px;background:linear-gradient(to right,#3e3e3e,#8a8a8a)"></div>
<div style="left:0px;top:766px;width:25px;height:1px;background:linear-gradient(to right,#3e3e3e,#8a8a8a)"></div>
<div style="left:0px;top:786px;width:25px;height:1px;background:linear-gradient(to right,#3e3e3e,#8a8a8a)"></div>
<div style="left:0px;top:806px;width:25px;height:1px;background:linear-gradient(to right,#3e3e3e,#8a8a8a)"></div>
<div style="left:0px;top:826px;width:25px;height:1px;background:linear-gradient(to right,#3e3e3e,#8a8a8a)"></div>
<div style="left:0px;top:846px;width:25px;height:1px;background:linear-gradient(to right,#3e3e3e,#8a8a8a)"></div>
<div style="left:0px;top:866px;width:25px;height:1px;background:linear-gradient(to right,#3e3e3e,#8a8a8a)"></div>
<div style="left:0px;top:886px;width:25px;height:1px;background:linear-gradient(to right,#3e3e3e,#8a8a8a)"></div>
<div style="left:0px;top:906px;width:25px;height:1px;background:linear-gradient(to right,#3e3e3e,#8a8a8a)"></div>
<div style="left:0px;top:926px;width:25px;height:1px;background:linear-gradient(to right,#3e3e3e,#8a8a8a)"></div>
<div style="left:0px;top:946px;width:25px;height:1px;background:linear-gradient(to right,#3e3e3e,#8a8a8a)"></div>
<div style="left:0px;top:966px;width:25px;height:1px;background:linear-gradient(to right,#3e3e3e,#8a8a8a)"></div>
<div style="left:0px;top:986px;width:25px;height:1px;background:linear-gradient(to right,#3e3e3e,#8a8a8a)"></div>
<div style="left:0px;top:806px;width:25px;height:20px;background:#6a6a6a;border-right:2px solid #107c41;box-sizing:border-box"></div>
<div class="t" style="left:8.89px;top:231.00px;font-size:13px;color:#e0e0e0;font-weight:400;font-family:'Liberation Sans',sans-serif;">1</div>
<div class="t" style="left:8.89px;top:251.00px;font-size:13px;color:#e0e0e0;font-weight:400;font-family:'Liberation Sans',sans-serif;">2</div>
<div class="t" style="left:8.89px;top:271.00px;font-size:13px;color:#e0e0e0;font-weight:400;font-family:'Liberation Sans',sans-serif;">3</div>
<div class="t" style="left:8.89px;top:291.00px;font-size:13px;color:#e0e0e0;font-weight:400;font-family:'Liberation Sans',sans-serif;">4</div>
<div class="t" style="left:8.89px;top:311.00px;font-size:13px;color:#e0e0e0;font-weight:400;font-family:'Liberation Sans',sans-serif;">5</div>
<div class="t" style="left:8.89px;top:331.00px;font-size:13px;color:#e0e0e0;font-weight:400;font-family:'Liberation Sans',sans-serif;">6</div>
<div class="t" style="left:8.89px;top:351.00px;font-size:13px;color:#e0e0e0;font-weight:400;font-family:'Liberation Sans',sans-serif;">7</div>
<div class="t" style="left:8.89px;top:371.00px;font-size:13px;color:#e0e0e0;font-weight:400;font-family:'Liberation Sans',sans-serif;">8</div>
<div class="t" style="left:8.89px;top:391.00px;font-size:13px;color:#e0e0e0;font-weight:400;font-family:'Liberation Sans',sans-serif;">9</div>
<div class="t" style="left:5.27px;top:411.00px;font-size:13px;color:#e0e0e0;font-weight:400;font-family:'Liberation Sans',sans-serif;">10</div>
<div class="t" style="left:5.75px;top:431.00px;font-size:13px;color:#e0e0e0;font-weight:400;font-family:'Liberation Sans',sans-serif;">11</div>
<div class="t" style="left:5.27px;top:451.00px;font-size:13px;color:#e0e0e0;font-weight:400;font-family:'Liberation Sans',sans-serif;">12</div>
<div class="t" style="left:5.27px;top:471.00px;font-size:13px;color:#e0e0e0;font-weight:400;font-family:'Liberation Sans',sans-serif;">13</div>
<div class="t" style="left:5.27px;top:491.00px;font-size:13px;color:#e0e0e0;font-weight:400;font-family:'Liberation Sans',sans-serif;">14</div>
<div class="t" style="left:5.27px;top:511.00px;font-size:13px;color:#e0e0e0;font-weight:400;font-family:'Liberation Sans',sans-serif;">15</div>
<div class="t" style="left:5.27px;top:531.00px;font-size:13px;color:#e0e0e0;font-weight:400;font-family:'Liberation Sans',sans-serif;">16</div>
<div class="t" style="left:5.27px;top:551.00px;font-size:13px;color:#e0e0e0;font-weight:400;font-family:'Liberation Sans',sans-serif;">17</div>
<div class="t" style="left:5.27px;top:571.00px;font-size:13px;color:#e0e0e0;font-weight:400;font-family:'Liberation Sans',sans-serif;">18</div>
<div class="t" style="left:5.27px;top:591.00px;font-size:13px;color:#e0e0e0;font-weight:400;font-family:'Liberation Sans',sans-serif;">19</div>
<div class="t" style="left:5.27px;top:611.00px;font-size:13px;color:#e0e0e0;font-weight:400;font-family:'Liberation Sans',sans-serif;">20</div>
<div class="t" style="left:5.27px;top:631.00px;font-size:13px;color:#e0e0e0;font-weight:400;font-family:'Liberation Sans',sans-serif;">21</div>
<div class="t" style="left:5.27px;top:651.00px;font-size:13px;color:#e0e0e0;font-weight:400;font-family:'Liberation Sans',sans-serif;">22</div>
<div class="t" style="left:5.27px;top:671.00px;font-size:13px;color:#e0e0e0;font-weight:400;font-family:'Liberation Sans',sans-serif;">23</div>
<div class="t" style="left:5.27px;top:691.00px;font-size:13px;color:#e0e0e0;font-weight:400;font-family:'Liberation Sans',sans-serif;">24</div>
<div class="t" style="left:5.27px;top:711.00px;font-size:13px;color:#e0e0e0;font-weight:400;font-family:'Liberation Sans',sans-serif;">25</div>
<div class="t" style="left:5.27px;top:731.00px;font-size:13px;color:#e0e0e0;font-weight:400;font-family:'Liberation Sans',sans-serif;">26</div>
<div class="t" style="left:5.27px;top:751.00px;font-size:13px;color:#e0e0e0;font-weight:400;font-family:'Liberation Sans',sans-serif;">27</div>
<div class="t" style="left:5.27px;top:771.00px;font-size:13px;color:#e0e0e0;font-weight:400;font-family:'Liberation Sans',sans-serif;">28</div>
<div class="t" style="left:5.27px;top:791.00px;font-size:13px;color:#e0e0e0;font-weight:400;font-family:'Liberation Sans',sans-serif;">29</div>
<div class="t" style="left:5.27px;top:811.00px;font-size:13px;color:#e0e0e0;font-weight:400;font-family:'Liberation Sans',sans-serif;">30</div>
<div class="t" style="left:5.27px;top:831.00px;font-size:13px;color:#e0e0e0;font-weight:400;font-family:'Liberation Sans',sans-serif;">31</div>
<div class="t" style="left:5.27px;top:851.00px;font-size:13px;color:#e0e0e0;font-weight:400;font-family:'Liberation Sans',sans-serif;">32</div>
<div class="t" style="left:5.27px;top:871.00px;font-size:13px;color:#e0e0e0;font-weight:400;font-family:'Liberation Sans',sans-serif;">33</div>
<div class="t" style="left:5.27px;top:891.00px;font-size:13px;color:#e0e0e0;font-weight:400;font-family:'Liberation Sans',sans-serif;">34</div>
<div class="t" style="left:5.27px;top:911.00px;font-size:13px;color:#e0e0e0;font-weight:400;font-family:'Liberation Sans',sans-serif;">35</div>
<div class="t" style="left:5.27px;top:931.00px;font-size:13px;color:#e0e0e0;font-weight:400;font-family:'Liberation Sans',sans-serif;">36</div>
<div class="t" style="left:5.27px;top:951.00px;font-size:13px;color:#e0e0e0;font-weight:400;font-family:'Liberation Sans',sans-serif;">37</div>
<div class="t" style="left:5.27px;top:971.00px;font-size:13px;color:#e0e0e0;font-weight:400;font-family:'Liberation Sans',sans-serif;">38</div>
<svg style="left:10px;top:211px;" width="13" height="12" viewBox="0 0 13 12"><path d="M12 0 L12 12 L0 12 Z" fill="#6e6e6e"/></svg>
<div style="left:325px;top:381px;width:344px;height:288px;background:#f0f0f0;border:1px solid #00b294;box-sizing:border-box;box-shadow:2px 3px 14px rgba(0,0,0,0.35)"></div>
<div style="left:325px;top:381px;width:344px;height:31px;background:#00b294"></div>
<div class="t" style="left:334.40px;top:390.84px;font-size:12px;color:#000000;font-weight:400;font-family:'Liberation Sans',sans-serif;transform:scaleX(0.9565);transform-origin:left;">Grabar macro</div>
<div class="t" style="left:597.50px;top:388.73px;font-size:14.5px;color:#111;font-weight:400;font-family:'Liberation Sans',sans-serif;transform:scaleX(0.7440);transform-origin:left;">?</div>
<svg style="left:639px;top:391px;" width="12" height="11" viewBox="0 0 12 11"><path d="M0.7 0.5 L11 10.5 M11 0.5 L0.7 10.5" stroke="#111" stroke-width="1.1"/></svg>
<div class="t" style="left:332.20px;top:419.84px;font-size:12px;color:#000000;font-weight:400;font-family:'Liberation Sans',sans-serif;transform:scaleX(0.9416);transform-origin:left;">Nombre de la macro:</div>
<div style="left:332px;top:431px;width:8px;height:1px;background:#000"></div>
<div style="left:350px;top:435px;width:312px;height:20px;background:#fff;border:1px solid #a8a8a8;box-sizing:border-box"></div>
<div style="left:353px;top:438px;width:38px;height:13px;background:#99c9ef"></div>
<div class="t" style="left:353.50px;top:438.84px;font-size:12px;color:#000000;font-weight:400;font-family:'Liberation Sans',sans-serif;transform:scaleX(0.9247);transform-origin:left;">Macro1</div>
<div class="t" style="left:332.20px;top:463.84px;font-size:12px;color:#000000;font-weight:400;font-family:'Liberation Sans',sans-serif;transform:scaleX(0.9598);transform-origin:left;">Tecla de método abreviado:</div>
<div style="left:377px;top:476px;width:9px;height:1px;background:#000"></div>
<div class="t" style="left:384.70px;top:482.64px;font-size:12px;color:#222;font-weight:400;font-family:'Liberation Sans',sans-serif;transform:scaleX(0.8085);transform-origin:left;">CTRL+</div>
<div style="left:420px;top:479px;width:18px;height:20px;background:#fff;border:1px solid #a8a8a8;box-sizing:border-box"></div>
<div class="t" style="left:332.20px;top:507.94px;font-size:12px;color:#000000;font-weight:400;font-family:'Liberation Sans',sans-serif;transform:scaleX(0.9363);transform-origin:left;">Guardar macro en:</div>
<div style="left:332px;top:520px;width:8px;height:1px;background:#000"></div>
<div style="left:350px;top:523px;width:312px;height:22px;background:#fff;border:1px solid #a8a8a8;box-sizing:border-box"></div>
<div style="left:644px;top:524px;width:17px;height:20px;background:#e6e6e6;border-left:1px solid #c8c8c8;box-sizing:border-box"></div>
<svg style="left:648px;top:531px;" width="10" height="6" viewBox="0 0 10 6"><path d="M1 1 L5 5 L9 1" fill="none" stroke="#333" stroke-width="1.1"/></svg>
<div class="t" style="left:354.30px;top:528.04px;font-size:12px;color:#000000;font-weight:400;font-family:'Liberation Sans',sans-serif;transform:scaleX(0.9456);transform-origin:left;">Este libro</div>
<div class="t" style="left:332.20px;top:553.84px;font-size:12px;color:#000000;font-weight:400;font-family:'Liberation Sans',sans-serif;transform:scaleX(0.9451);transform-origin:left;">Descripción:</div>
<div style="left:332px;top:566px;width:8px;height:1px;background:#000"></div>
<div style="left:350px;top:569px;width:312px;height:58px;background:#fff;border:1px solid #a8a8a8;box-sizing:border-box"></div>
<div style="left:503px;top:638px;width:74px;height:22px;background:#e1e1e1;border:2px solid #0a64d0;box-sizing:border-box"></div>
<div class="t" style="left:520.30px;top:642.94px;font-size:12px;color:#000000;font-weight:400;font-family:'Liberation Sans',sans-serif;transform:scaleX(0.9358);transform-origin:left;">Aceptar</div>
<div style="left:587px;top:638px;width:74px;height:22px;background:#e1e1e1;border:1px solid #adadad;box-sizing:border-box"></div>
<div class="t" style="left:602.20px;top:642.94px;font-size:12px;color:#000000;font-weight:400;font-family:'Liberation Sans',sans-serif;transform:scaleX(0.9183);transform-origin:left;">Cancelar</div>
<div style="left:1899px;top:207px;width:21px;height:783px;background:#262626"></div>
<div style="left:1902px;top:209px;width:14px;height:14px;background:#383838;border:1px solid #5c5c5c;box-sizing:border-box"></div>
<svg style="left:1905px;top:213px;" width="9" height="6" viewBox="0 0 9 6"><path d="M0.5 5.5 L4.5 0.5 L8.5 5.5 Z" fill="#f0f0f0"/></svg>
<div style="left:1902px;top:224px;width:14px;height:735px;background:#383838;border:1px solid #5c5c5c;box-sizing:border-box"></div>
<div style="left:1902px;top:959px;width:14px;height:17px;background:#0e0e0e"></div>
<div style="left:1902px;top:977px;width:14px;height:13px;background:#383838;border:1px solid #5c5c5c;box-sizing:border-box"></div>
<svg style="left:1905px;top:981px;" width="9" height="6" viewBox="0 0 9 6"><path d="M0.5 0.5 L4.5 5.5 L8.5 0.5 Z" fill="#f0f0f0"/></svg>
<div style="left:0px;top:990px;width:1920px;height:28px;background:#262626"></div>
<svg style="left:27px;top:999px;" width="6" height="9" viewBox="0 0 6 9"><path d="M5.5 0.5 V8.5 L0.5 4.5 Z" fill="#9a9a9a"/></svg>
<svg style="left:55px;top:999px;" width="6" height="9" viewBox="0 0 6 9"><path d="M0.5 0.5 V8.5 L5.5 4.5 Z" fill="#9a9a9a"/></svg>
<div style="left:0px;top:990px;width:100px;height:1px;background:#7a7a7a"></div>
<div style="left:271px;top:990px;width:1630px;height:1px;background:#7a7a7a"></div>
<div style="left:270px;top:990px;width:1px;height:25px;background:#7a7a7a"></div>
<div style="left:100px;top:990px;width:171px;height:25px;background:#ffffff"></div>
<div style="left:100px;top:1013px;width:171px;height:2.5px;background:#1a7a45"></div>
<div class="t" style="left:112.50px;top:997.00px;font-size:13px;color:#16784a;font-weight:700;font-family:'Liberation Sans',sans-serif;transform:scaleX(0.9870);transform-origin:left;">intereses-2024-04-03 (2)</div>
<svg style="left:303px;top:995px;" width="18" height="18" viewBox="0 0 18 18"><circle cx="9" cy="9" r="7.8" fill="none" stroke="#e8e8e8" stroke-width="1.2"/><path d="M9 4.5 V13.5 M4.5 9 H13.5" stroke="#f0f0f0" stroke-width="1.6"/></svg>
<div style="left:1152px;top:999px;width:2px;height:2px;background:#ffffff"></div>
<div style="left:1152px;top:1003px;width:2px;height:2px;background:#ffffff"></div>
<div style="left:1152px;top:1007px;width:2px;height:2px;background:#ffffff"></div>
<div style="left:1169px;top:997px;width:15px;height:15px;background:#383838;border:1px solid #6a6a6a;box-sizing:border-box"></div>
<svg style="left:1173px;top:1001px;" width="6" height="8" viewBox="0 0 6 8"><path d="M5 0.5 V7.5 L0.5 4 Z" fill="#ffffff"/></svg>
<div style="left:1184px;top:997px;width:694px;height:15px;background:#383838;border:1px solid #6a6a6a;box-sizing:border-box"></div>
<div style="left:1878px;top:997px;width:6px;height:15px;background:#0e0e0e"></div>
<div style="left:1884px;top:997px;width:15px;height:15px;background:#383838;border:1px solid #6a6a6a;box-sizing:border-box"></div>
<svg style="left:1889px;top:1001px;" width="6" height="8" viewBox="0 0 6 8"><path d="M0.5 0.5 V7.5 L5 4 Z" fill="#ffffff"/></svg>
<div style="left:0px;top:1018px;width:1920px;height:22px;background:#32302e"></div>
<div style="left:0px;top:1018px;width:1920px;height:1px;background:repeating-linear-gradient(to right,#4a4a4a 0 2px,transparent 2px 4px)"></div>
<div class="t" style="left:12.00px;top:1023.34px;font-size:12px;color:#e8e8e8;font-weight:400;font-family:'Liberation Sans',sans-serif;transform:scaleX(0.9271);transform-origin:left;">Listo</div>
<svg style="left:55px;top:1022px;" width="15" height="15" viewBox="0 0 15 15"><rect x="0.6" y="0.6" width="13" height="12" fill="none" stroke="#e8e8e8" stroke-width="1.1"/><path d="M0.6 3.2 H13.6 M2.5 6 H5 M2.5 8.5 H4.5 M2.5 11 H4.5" stroke="#e8e8e8" stroke-width="1"/><circle cx="10" cy="10.2" r="4" fill="#32302e" stroke="#e8e8e8" stroke-width="1.1"/><circle cx="10" cy="10.2" r="1.8" fill="#e8e8e8"/></svg>
<svg style="left:87px;top:1021px;" width="15" height="16" viewBox="0 0 15 16"><circle cx="6" cy="2.5" r="1.8" fill="none" stroke="#e8e8e8" stroke-width="1"/><path d="M1 5 L6 6.5 L11 5 M6 6.5 V10 L3.5 15 M6 10 L8 15" fill="none" stroke="#e8e8e8" stroke-width="1.1"/><path d="M11 9 C11 7.5 14 7.5 14 9 C14 10.5 12.5 10.5 12.5 12 M12.5 13.5 V14.5" fill="none" stroke="#e8e8e8" stroke-width="1"/></svg>
<div class="t" style="left:104.40px;top:1023.84px;font-size:12px;color:#e8e8e8;font-weight:400;font-family:'Liberation Sans',sans-serif;transform:scaleX(0.9704);transform-origin:left;">Accesibilidad: No disponible</div>
<div style="left:1620px;top:1019px;width:40px;height:21px;background:#4f4e4c"></div>
<svg style="left:1633px;top:1022px;" width="14" height="14" viewBox="0 0 14 14"><rect x="0.5" y="0.5" width="13" height="13" fill="none" stroke="#f0f0f0" stroke-width="1"/><path d="M4.5 0.5 V13.5 M9.5 0.5 V13.5 M0.5 4.5 H13.5 M0.5 9.5 H13.5" stroke="#f0f0f0" stroke-width="1"/></svg>
<svg style="left:1672px;top:1022px;" width="15" height="14" viewBox="0 0 15 14"><rect x="0.6" y="0.6" width="13.8" height="12.8" fill="none" stroke="#f0f0f0" stroke-width="1.1"/><rect x="3" y="3" width="9" height="8" fill="none" stroke="#f0f0f0" stroke-width="1"/><path d="M5 5.5 H10 M5 7.5 H10" stroke="#f0f0f0" stroke-width="0.9"/></svg>
<svg style="left:1712px;top:1022px;" width="15" height="14" viewBox="0 0 15 14"><rect x="0.6" y="0.6" width="13.8" height="12.8" fill="none" stroke="#f0f0f0" stroke-width="1.1"/><path d="M0.6 8 H9 V0.6 M4.5 0.6 V8" fill="none" stroke="#f0f0f0" stroke-width="1.1"/></svg>
<div style="left:1746px;top:1028px;width:8px;height:1.3px;background:#e0e0e0"></div>
<div style="left:1759px;top:1028.5px;width:100px;height:1px;background:#e0e0e0"></div>
<div style="left:1807px;top:1024px;width:5px;height:11px;background:#f0f0f0"></div>
<svg style="left:1863px;top:1024px;" width="10" height="10" viewBox="0 0 10 10"><path d="M5 0.5 V9.5 M0.5 5 H9.5" stroke="#e0e0e0" stroke-width="1.2"/></svg>
<div class="t" style="left:1885.30px;top:1023.14px;font-size:12px;color:#e8e8e8;font-weight:400;font-family:'Liberation Sans',sans-serif;transform:scaleX(0.8602);transform-origin:left;">100%</div>
<div style="left:0px;top:1040px;width:1920px;height:40px;background:#212121"></div>
<svg style="left:15px;top:1052px;" width="18" height="17" viewBox="0 0 18 17"><path d="M0.5 2.3 L7.5 1.3 V8 H0.5 Z M8.5 1.1 L17.5 0 V8 H8.5 Z M0.5 9 H7.5 V15.7 L0.5 14.7 Z M8.5 9 H17.5 V17 L8.5 15.9 Z" fill="#ffffff"/></svg>
<div style="left:48px;top:1040px;width:288px;height:40px;background:#2c2c2c;border:1px solid #5a5a5a;border-bottom:none;box-sizing:border-box"></div>
<svg style="left:60px;top:1052px;" width="17" height="17" viewBox="0 0 17 17"><circle cx="10.5" cy="6.5" r="5.5" fill="none" stroke="#e6e6e6" stroke-width="1.3"/><path d="M6.5 10.5 L1 16" stroke="#e6e6e6" stroke-width="1.4"/></svg>
<div class="t" style="left:88.50px;top:1052.80px;font-size:15px;color:#e6e6e6;font-weight:400;font-family:'Liberation Sans',sans-serif;transform:scaleX(0.9579);transform-origin:left;">Type here to search</div>
<svg style="left:257px;top:1048px;" width="78" height="32" viewBox="0 0 78 32">
<path d="M0.5 32 C2 25 6 19 12 16.5 C16 15 22 14.5 30 14.5 L56 15 C66 15.5 74 17 76 22 C77 26 76 30 75 32 Z" fill="#1f9fe6"/>
<path d="M8 22 C12 17 18 15 28 15 L56 15.5 C64 16 70 18 71 21 C64 22 50 25 36 26 C24 27 14 25 8 22 Z" fill="#3ad6cc"/>
<path d="M41 19.5 C43 12 50 6 56 4 C60 2 64 0 67.5 0.5 C71 2.5 74 8 74.5 14 L75 21.5 C70 19 62 17 52 17 L41 18.5 Z" fill="#d98a42"/>
<path d="M41.5 16 C43 12 48 9 53 9 C57 6 62 1 67.5 0.8 C71 3 73.5 9 74 14 C70 10 66 7 62 8 C56 9 50 12 41.5 16 Z" fill="#5fae5e"/>
<path d="M18.5 15 C19 11 21 9.5 25 9.5 L38 10.5 C40 11 40.5 13 40 14.5 C32 15.5 25 15.5 18.5 15 Z" fill="#d98a42"/>
<path d="M19 12 C21 9.5 24 9.5 27 10 L38.5 11 C36 12 30 12 19 12 Z" fill="#5fae5e"/>
<path d="M9 21 C9.5 18 12 16 15 16.2 C19 16.5 23 18.5 23.5 20.5 C20 22 13 22 9 21 Z" fill="#d98a42"/>
<path d="M9.5 19 C11 16.5 14 16 16 16.5 C15 18 12 19 9.5 19 Z" fill="#5fae5e"/>
<path d="M35.7 24 C36 20 38.5 17 42 17 C45 17.5 47 20.5 49 21 C53 20 59 19.5 63 20 C66 21 67 23 66.5 25 C60 27.5 45 28 35.7 24 Z" fill="#d98a42"/>
<path d="M36.5 21 C38 18 40 17 42 17 C44.5 17.5 46.5 20 49 21.5 C45 22 40 22 36.5 21 Z M50 21 C55 19.5 60 19.5 63 20.5 C60 21.5 55 21.5 50 21 Z" fill="#5fae5e"/>
</svg>
<svg style="left:351px;top:1052px;" width="17" height="16" viewBox="0 0 17 16"><path d="M1 1 H13 M1 15 H13" stroke="#fff" stroke-width="1.3"/><rect x="2.5" y="4" width="9" height="8" fill="none" stroke="#fff" stroke-width="1.3"/><path d="M15.5 1 V4 M15.5 6.5 V9.5 M15.5 12 V15" stroke="#fff" stroke-width="1.3"/></svg>
<div style="left:390px;top:1050px;width:1px;height:20px;background:#555"></div>
<div style="left:392.5px;top:1050px;width:1px;height:20px;background:#555"></div>
<svg style="left:420px;top:1051px;" width="21" height="16" viewBox="0 0 21 16"><rect x="0" y="0" width="21" height="16" rx="1" fill="#d8d8d8"/><rect x="6" y="2.5" width="8" height="11" fill="#1a73d6"/><path d="M2 4 H4.5 M2 7 H4.5 M2 10 H4.5 M15.5 4 H19 M15.5 7 H19 M15.5 10 H19" stroke="#888" stroke-width="1"/></svg>
<svg style="left:467px;top:1048px;" width="24" height="24" viewBox="0 0 24 24"><path d="M7 6 V3 C7 1.5 8 0.8 9 0.8 H15 C16 0.8 17 1.5 17 3 V6" fill="none" stroke="#2aa8e8" stroke-width="1.8"/><rect x="0.5" y="5.5" width="23" height="18" rx="3" fill="#f0f0f0"/><rect x="7" y="10" width="4.5" height="4.5" fill="#f25022"/><rect x="12.5" y="10" width="4.5" height="4.5" fill="#7fba00"/><rect x="7" y="15.5" width="4.5" height="4.5" fill="#00a4ef"/><rect x="12.5" y="15.5" width="4.5" height="4.5" fill="#ffb900"/></svg>
<svg style="left:516px;top:1048px;" width="35" height="28" viewBox="0 0 35 28"><path d="M0.5 10 L13 1 L25.5 10 V22.5 H0.5 Z" fill="#1c6fc4"/><path d="M3 9 H23 V17 L13 22 L3 17 Z" fill="#eaf4ff"/><path d="M0.5 10 L13 18 L25.5 10 V22.5 H0.5 Z" fill="#3a9ef0"/><circle cx="25" cy="19.5" r="7.3" fill="#2a3a4a" stroke="#9aa" stroke-width="1"/><text x="25" y="24" font-family="Liberation Sans" font-size="11" fill="#fff" text-anchor="middle">1</text></svg>
<svg style="left:567px;top:1049px;" width="22" height="22" viewBox="0 0 22 22"><circle cx="11" cy="11" r="10.5" fill="#f4f8fb"/><path d="M0.5 11 A10.5 10.5 0 0 1 4 3" fill="none" stroke="#3fc1e8" stroke-width="1.5"/><path d="M6 7 H16 M6 11 H13 M6 15 H11" stroke="#2e3a4a" stroke-width="1.8"/></svg>
<svg style="left:617px;top:1051px;" width="21" height="16" viewBox="0 0 21 16"><rect x="0" y="0" width="21" height="16" rx="1" fill="#d8d8d8"/><rect x="6" y="2.5" width="8" height="11" fill="#1a73d6"/><path d="M2 4 H4.5 M2 7 H4.5 M2 10 H4.5 M15.5 4 H19 M15.5 7 H19 M15.5 10 H19" stroke="#888" stroke-width="1"/></svg>
<svg style="left:664px;top:1047px;" width="25" height="23" viewBox="0 0 25 23"><rect x="0" y="4" width="24" height="18" rx="1" fill="#1d6fe0"/><path d="M3 14 C6 10 8 16 11 13 C13 11 15 13 17 12" fill="none" stroke="#fff" stroke-width="1.6"/><path d="M16 12 L23 1" stroke="#222" stroke-width="2"/></svg>
<div style="left:701px;top:1040px;width:48px;height:40px;background:#a35c2a"></div>
<div style="left:701px;top:1077px;width:48px;height:3px;background:#ff7a1a"></div>
<svg style="left:714px;top:1048px;" width="25" height="25" viewBox="0 0 25 25"><circle cx="12.5" cy="12.5" r="11.5" fill="#1b8ad8"/><path d="M2 12 C3 4 11 0.5 17 2 C22 3.5 24.5 8 24 12 C22 9 18 8 14 9.5 C10 11 9 15 11 18 C6 19 2 16 2 12 Z" fill="#4bd07a"/><path d="M11 18 C13 22 19 22 23 17 C20 20 15 20 14 16 Z" fill="#2aa8e8"/><circle cx="8" cy="18" r="6" fill="#8a8a8a" stroke="#555" stroke-width="0.5"/><circle cx="8" cy="16" r="2" fill="#ddd"/><path d="M4.5 21.5 C5 18.5 11 18.5 11.5 21.5" fill="#ddd"/></svg>
<svg style="left:762px;top:1047px;" width="25" height="25" viewBox="0 0 25 25"><circle cx="12.5" cy="12.5" r="12" fill="#1ed760"/><path d="M6 9 C10 7.5 15 8 19 10 M6.8 12.5 C10 11.5 14 12 17.5 13.5 M7.5 16 C10 15.3 13 15.6 15.8 16.8" fill="none" stroke="#111" stroke-width="1.8" stroke-linecap="round"/></svg>
<svg style="left:811px;top:1050px;" width="23" height="19" viewBox="0 0 23 19"><path d="M0.5 2 H8 L10 4 H22.5 V18.5 H0.5 Z" fill="#f0b72f"/><path d="M0.5 6 H22.5 V18.5 H0.5 Z" fill="#ffd35a"/><path d="M6 18.5 V11 H17 V18.5 H14 V14 H9 V18.5 Z" fill="#2a8ae0"/></svg>
<div style="left:803px;top:1078px;width:40px;height:2px;background:#8fdbd3"></div>
<svg style="left:862px;top:1050px;" width="21" height="21" viewBox="0 0 21 21"><path d="M2 3 L14 1 L19 4 V19 L6 20.5 L2 17 Z" fill="#fff" stroke="#888" stroke-width="1.2"/><path d="M6 6 L18 5 M6 6 V19" stroke="#222" stroke-width="1"/><text x="12" y="17" font-family="Liberation Serif" font-size="12" font-weight="bold" fill="#111" text-anchor="middle">N</text></svg>
<div style="left:909px;top:1048px;width:24px;height:24px;background:#000"></div>
<svg style="left:909px;top:1048px;" width="24" height="24" viewBox="0 0 24 24"><path d="M8 4 H11 L13.5 13 V4 H16.5 V20 L13.5 19.5 L11 11 V20 L8 20.5 Z" fill="#e50914"/></svg>
<svg style="left:957px;top:1048px;" width="25" height="24" viewBox="0 0 25 24"><path d="M18 0.5 L24.5 3.5 V20.5 L18 23.5 L6 13 L2.5 16 L0.5 15 V9 L2.5 8 L6 11 Z M18 6.5 L11 12 L18 17.5 Z" fill="#2d9ae8"/><path d="M18 0.5 L24.5 3.5 V20.5 L18 23.5 Z" fill="#1a7fd0"/></svg>
<svg style="left:1007px;top:1048px;" width="25" height="25" viewBox="0 0 25 25"><circle cx="12" cy="12" r="11.5" fill="#ef3d2a"/><path d="M5 7 L8 16 L10.5 10 L13 16 L16 7" fill="none" stroke="#fff" stroke-width="2"/><rect x="14" y="14" width="10" height="10" rx="3" fill="#3cb44a"/><text x="19" y="22" font-family="Liberation Sans" font-size="8" fill="#fff" text-anchor="middle">S</text></svg>
<div style="left:999px;top:1078px;width:40px;height:2px;background:#8fdbd3"></div>
<svg style="left:1056px;top:1047px;" width="27" height="26" viewBox="0 0 27 26"><circle cx="12" cy="12" r="11.5" fill="#db4437"/><path d="M12 12 L2 17.8 A11.5 11.5 0 0 0 17.8 22 Z" fill="#0f9d58"/><path d="M12 12 L17.8 22 A11.5 11.5 0 0 0 22 6.3 Z" fill="#f4b400"/><circle cx="12" cy="12" r="5" fill="#fff"/><circle cx="12" cy="12" r="4" fill="#4285f4"/><circle cx="19" cy="19" r="6.5" fill="#8e5ad8"/><text x="19" y="23" font-family="Liberation Serif" font-size="10" fill="#fff" text-anchor="middle">f</text></svg>
<div style="left:1048px;top:1078px;width:40px;height:2px;background:#8fdbd3"></div>
<div style="left:1093px;top:1040px;width:48px;height:40px;background:#a35c2a"></div>
<div style="left:1093px;top:1077px;width:48px;height:3px;background:#ff7a1a"></div>
<svg style="left:1105px;top:1048px;" width="24" height="24" viewBox="0 0 24 24"><circle cx="12" cy="12" r="11.5" fill="#5865f2"/><path d="M6.5 8 C8 7 9.5 6.6 10.5 6.5 L11 7.3 C11.7 7.2 12.3 7.2 13 7.3 L13.5 6.5 C14.5 6.6 16 7 17.5 8 C18.5 10 19 12.5 18.8 15 C17.5 16 16.3 16.5 15.2 16.8 L14.5 15.7 C13 16.1 11 16.1 9.5 15.7 L8.8 16.8 C7.7 16.5 6.5 16 5.2 15 C5 12.5 5.5 10 6.5 8 Z" fill="#fff"/><circle cx="9.7" cy="12" r="1.3" fill="#5865f2"/><circle cx="14.3" cy="12" r="1.3" fill="#5865f2"/></svg>
<svg style="left:1153px;top:1047px;" width="26" height="26" viewBox="0 0 26 26"><path d="M13 1.5 A11.3 11.3 0 1 1 6.5 22 L1.5 24 L3.5 19 A11.3 11.3 0 0 1 13 1.5 Z" fill="none" stroke="#25d366" stroke-width="2.3"/><path d="M8.5 8 C9 7 10 6.8 10.5 7.5 L11.5 9.5 C11.7 10 11 10.8 10.8 11 C11.5 12.7 13 14.2 14.8 15 C15.2 14.6 16 13.9 16.5 14.2 L18.3 15.3 C19 15.8 18.6 16.8 17.8 17.5 C15 19 7 14 8.5 8 Z" fill="#25d366"/></svg>
<div style="left:1146px;top:1078px;width:41px;height:2px;background:#8fdbd3"></div>
<div style="left:1191px;top:1040px;width:48px;height:40px;background:#4d4d4d"></div>
<div style="left:1191px;top:1078px;width:48px;height:2px;background:#8fdbd3"></div>
<svg style="left:1202px;top:1048px;" width="26" height="24" viewBox="0 0 26 24"><rect x="7" y="1" width="18" height="22" rx="1.5" fill="#21a366"/><rect x="7" y="12" width="18" height="11" fill="#107c41"/><path d="M16 1 V23 M7 8 H25 M7 15.5 H25" stroke="#33c481" stroke-width="0.8" opacity="0.7"/><rect x="0" y="5.5" width="13" height="13" rx="1.5" fill="#107c41"/><path d="M3.3 8.5 L9.7 15.5 M9.7 8.5 L3.3 15.5" stroke="#fff" stroke-width="2"/></svg>
<div style="left:1370px;top:1050px;width:1px;height:20px;background:#555"></div>
<div style="left:1373px;top:1050px;width:1px;height:20px;background:#555"></div>
<div class="t" style="left:1388.30px;top:1051.84px;font-size:12px;color:#e6e6e6;font-weight:400;font-family:'Liberation Sans',sans-serif;transform:scaleX(0.8371);transform-origin:left;">ES</div>
<div style="left:1437px;top:1050px;width:1px;height:20px;background:#555"></div>
<div style="left:1440px;top:1050px;width:1px;height:20px;background:#555"></div>
<svg style="left:1456px;top:1049px;" width="25" height="23" viewBox="0 0 25 23"><circle cx="11" cy="11" r="10" fill="#1d8ae0" stroke="#fff" stroke-width="1.6"/><text x="11" y="16.5" font-family="Liberation Sans" font-size="15" font-weight="bold" fill="#fff" text-anchor="middle">?</text><circle cx="19.5" cy="17.5" r="5" fill="#f8b400"/><path d="M19.5 15.5 V20" stroke="#fff" stroke-width="1.5"/></svg>
<svg style="left:1529px;top:1047px;" width="27" height="26" viewBox="0 0 27 26"><circle cx="11" cy="14" r="9.5" fill="#f59a23"/><path d="M1 12 C1 8 5 7 7 8.5 C8.5 5.5 13 6 13.5 9.5 C15.5 9.5 16 12 14 12.5 H1.5 Z" fill="#a8d4f0"/><path d="M10 22 C10 18.5 13.5 18 15 19 C16.5 16.5 21 17 21 20 C23 20 23 23 21 23 H10.5 Z" fill="#a8d4f0"/><circle cx="19" cy="6.5" r="6" fill="#d93025"/><text x="19" y="10" font-family="Liberation Sans" font-size="9" fill="#fff" text-anchor="middle">1</text></svg>
<div class="t" style="left:1561.80px;top:1052.10px;font-size:15px;color:#f0f0f0;font-weight:400;font-family:'Liberation Sans',sans-serif;transform:scaleX(0.8980);transform-origin:left;">81°F  Partly sunny</div>
<svg style="left:1696px;top:1055px;" width="14" height="9" viewBox="0 0 14 9"><path d="M1 8 L7 1.5 L13 8" fill="none" stroke="#f0f0f0" stroke-width="1.4"/></svg>
<svg style="left:1721px;top:1050px;" width="15" height="19" viewBox="0 0 15 19"><path d="M1 17 C1 9 7 4 14 4 M3.5 17 C3.5 11 8 7 14 7 M6 17 C6 13 9.5 10 14 10" fill="none" stroke="#f0f0f0" stroke-width="1.2"/><circle cx="12" cy="15.5" r="1.8" fill="#f0f0f0"/></svg>
<svg style="left:1746px;top:1050px;" width="19" height="21" viewBox="0 0 19 21"><path d="M3 19 C1 17 2 13 5 12 L14 2 C15 1 17 1 17.5 2.5 C18 4 17 5 16 6 L7 16" fill="none" stroke="#f0f0f0" stroke-width="1.2"/><path d="M2 14 C4 10 9 12 8 15 C7 18 3 17 4 14 C6 12 12 13 13 10 C14 8 16 8 17.5 9.5" fill="none" stroke="#f0f0f0" stroke-width="1.1"/></svg>
<svg style="left:1774px;top:1053px;" width="24" height="14" viewBox="0 0 24 14"><rect x="0.6" y="0.6" width="22.8" height="12.8" fill="none" stroke="#f0f0f0" stroke-width="1.2"/><path d="M3 4 H21 M3 6.5 H21 M6 10 H18" stroke="#f0f0f0" stroke-width="1" stroke-dasharray="1.2 1"/></svg>
<div class="t" style="left:1812.06px;top:1044.84px;font-size:12px;color:#f0f0f0;font-weight:400;font-family:'Liberation Sans',sans-serif;transform:scaleX(0.9577);transform-origin:center;">9:35 AM</div>
<div class="t" style="left:1808.31px;top:1061.94px;font-size:12px;color:#f0f0f0;font-weight:400;font-family:'Liberation Sans',sans-serif;transform:scaleX(0.9741);transform-origin:center;">5/10/2024</div>
<svg style="left:1878px;top:1049px;" width="26" height="27" viewBox="0 0 26 27"><path d="M0.8 0.8 H17 V13 H8 L4 16.5 V13 H0.8 Z" fill="#f0f0f0"/><path d="M3 4 H14 M3 7 H14 M3 10 H10" stroke="#212121" stroke-width="1"/><circle cx="17" cy="17.5" r="8" fill="#212121" stroke="#888" stroke-width="1"/><text x="17" y="22" font-family="Liberation Sans" font-size="13" font-weight="bold" fill="#fff" text-anchor="middle">4</text></svg>
<div style="left:1915px;top:1040px;width:1px;height:40px;background:#555"></div>
</body></html>
